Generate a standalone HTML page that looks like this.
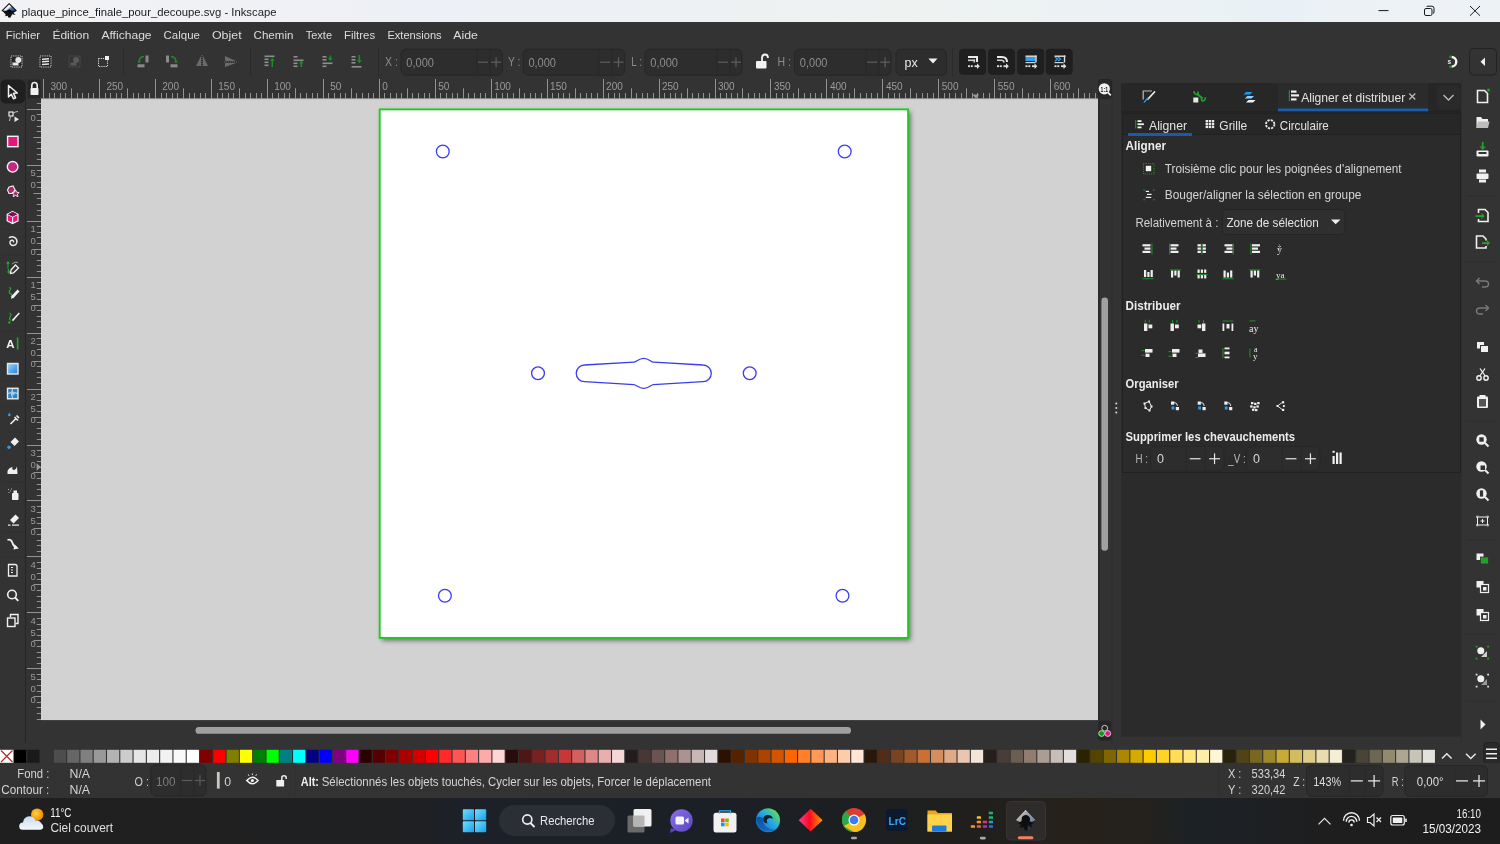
<!DOCTYPE html><html><head><meta charset="utf-8"><title>Inkscape</title><style>html,body{margin:0;padding:0;background:#333;overflow:hidden;width:1500px;height:844px}svg{display:block;font-family:"Liberation Sans",sans-serif;will-change:transform}</style></head><body>
<svg width="1500" height="844" viewBox="0 0 1500 844" font-family="Liberation Sans, sans-serif">
<rect x="0" y="0" width="1500" height="844" fill="#333333" />
<defs><linearGradient id="tg" x1="0" x2="1" y1="0" y2="0"><stop offset="0" stop-color="#f2f2f4"/><stop offset="0.3" stop-color="#edf0f6"/><stop offset="0.6" stop-color="#eef2f1"/><stop offset="0.85" stop-color="#eaf1f6"/><stop offset="1" stop-color="#eef2f5"/></linearGradient></defs>
<rect x="0" y="0" width="1500" height="22" fill="url(#tg)" />
<defs><linearGradient id="lg" x1="0.1" y1="0.2" x2="0.9" y2="0.8"><stop offset="0" stop-color="#ffffff"/><stop offset="0.42" stop-color="#f0f2f5"/><stop offset="0.62" stop-color="#4a78b8"/><stop offset="1" stop-color="#234f90"/></linearGradient></defs>
<path d="M9.2 3.6 L16.2 10.6 L12.8 12.4 L9.3 11.4 L5.6 12.4 L2.2 10.6 Z" fill="url(#lg)" stroke="#101010" stroke-width="1.1" stroke-linejoin="round"/>
<path d="M3.2 10.8 L15 10.8 L13 12.8 L14.8 13.6 L12 14.4 L10.5 17.6 L8.6 17.8 L7.6 15.8 L5.3 16.2 L5.6 14.2 L4.2 13 Z" fill="#111111" />
<path d="M6.5 11 L9.3 9.2 L12 11 L9.3 12.5 Z" fill="#000000" />
<path d="M13 14.2 L15.6 14 L15 14.8 L13.2 15 Z" fill="#333" />
<text x="21.5" y="15.5" font-size="11.3" fill="#1b1b1b" >plaque_pince_finale_pour_decoupe.svg - Inkscape</text>
<line x1="1378.5" y1="10.6" x2="1388.5" y2="10.6" stroke="#1b1b1b" stroke-width="1" />
<rect x="1424.5" y="8.5" width="7.5" height="7" rx="1.5" fill="none" stroke="#1b1b1b" stroke-width="1"/>
<path d="M1426.5 7 Q1426.8 6.2 1428 6.2 L1432 6.2 Q1434 6.2 1434 8.2 L1434 12 Q1434 13.3 1433 13.5" fill="none" stroke="#1b1b1b" stroke-width="1" />
<line x1="1470" y1="6" x2="1480" y2="15.7" stroke="#1b1b1b" stroke-width="1" />
<line x1="1480" y1="6" x2="1470" y2="15.7" stroke="#1b1b1b" stroke-width="1" />
<rect x="0" y="22" width="1500" height="57" fill="#333333" />
<text x="5.7" y="39" font-size="11.8" fill="#dcdcdc" textLength="34.4" lengthAdjust="spacingAndGlyphs" >Fichier</text>
<text x="52.4" y="39" font-size="11.8" fill="#dcdcdc" textLength="36.8" lengthAdjust="spacingAndGlyphs" >Édition</text>
<text x="101.4" y="39" font-size="11.8" fill="#dcdcdc" textLength="50.2" lengthAdjust="spacingAndGlyphs" >Affichage</text>
<text x="163.6" y="39" font-size="11.8" fill="#dcdcdc" textLength="36.3" lengthAdjust="spacingAndGlyphs" >Calque</text>
<text x="211.9" y="39" font-size="11.8" fill="#dcdcdc" textLength="29.7" lengthAdjust="spacingAndGlyphs" >Objet</text>
<text x="253.6" y="39" font-size="11.8" fill="#dcdcdc" textLength="39.8" lengthAdjust="spacingAndGlyphs" >Chemin</text>
<text x="305.7" y="39" font-size="11.8" fill="#dcdcdc" textLength="26.4" lengthAdjust="spacingAndGlyphs" >Texte</text>
<text x="344.09999999999997" y="39" font-size="11.8" fill="#dcdcdc" textLength="31.0" lengthAdjust="spacingAndGlyphs" >Filtres</text>
<text x="387.4" y="39" font-size="11.8" fill="#dcdcdc" textLength="54.2" lengthAdjust="spacingAndGlyphs" >Extensions</text>
<text x="453.2" y="39" font-size="11.8" fill="#dcdcdc" textLength="24.7" lengthAdjust="spacingAndGlyphs" >Aide</text>
<g>
<rect x="11" y="56" width="11" height="11" fill="#262626" stroke="#cfcfcf" stroke-width="1" stroke-dasharray="1.2 1"/>
<circle cx="18.3" cy="60" r="3" fill="#e6e6e6"/>
<rect x="12.5" y="62.5" width="6" height="3" fill="#e6e6e6" />
<rect x="40" y="56" width="11" height="11" fill="#262626" stroke="#cfcfcf" stroke-width="1" stroke-dasharray="1.2 1"/>
<path d="M42 58.5 L49 58.0 L49 59.5 L42 60.0 Z" fill="#e6e6e6" />
<path d="M42 61.1 L49 60.6 L49 62.1 L42 62.6 Z" fill="#e6e6e6" />
<path d="M42 63.7 L49 63.2 L49 64.7 L42 65.2 Z" fill="#e6e6e6" />
<rect x="69" y="56" width="11" height="11" fill="none" stroke="#555" stroke-width="1" stroke-dasharray="1.2 1"/>
<circle cx="76" cy="60" r="3" fill="#5a5a5a"/>
<rect x="70.5" y="62.5" width="6" height="3" fill="#5a5a5a" />
<rect x="98.5" y="58.5" width="9" height="8" fill="none" stroke="#dcdcdc" stroke-width="1" stroke-dasharray="1.2 1"/>
<rect x="105" y="56" width="4" height="4" fill="#f0f0f0" />
</g>
<line x1="123.5" y1="48" x2="123.5" y2="76" stroke="#2b2b2b" stroke-width="1" />
<rect x="137.5" y="64.3" width="7" height="3" fill="#8a8a8a" />
<rect x="145.5" y="55.5" width="3" height="7" fill="#8a8a8a" />
<path d="M139 62 Q139 57 144 56.5" fill="none" stroke="#1f8a24" stroke-width="1.6" />
<path d="M137.5 61 L139 63.5 L141 61 Z" fill="#1f8a24" />
<rect x="166" y="55.5" width="3" height="7" fill="#8a8a8a" />
<rect x="170.5" y="64.3" width="7" height="3" fill="#8a8a8a" />
<path d="M171 56.5 Q176 57 176 62" fill="none" stroke="#1f8a24" stroke-width="1.6" />
<path d="M174 61 L176 63.5 L178 61 Z" fill="#1f8a24" />
<path d="M201 56 L196 66 L201 66 Z" fill="#6a6a6a" />
<path d="M203 56 L208 66 L203 66 Z" fill="#6a6a6a" />
<line x1="202" y1="55" x2="202" y2="67" stroke="#777" stroke-width="0.8" stroke-dasharray="1 1"/>
<path d="M225 56 L236 61 L225 61 Z" fill="#6a6a6a" />
<path d="M225 63 L236 63 L225 67 Z" fill="#6a6a6a" />
<line x1="224" y1="62" x2="237" y2="62" stroke="#777" stroke-width="0.8" stroke-dasharray="1 1"/>
<line x1="250.5" y1="48" x2="250.5" y2="76" stroke="#2b2b2b" stroke-width="1" />
<rect x="264.5" y="55.5" width="10" height="1.6" fill="#8d8d8d" />
<rect x="264.5" y="58.5" width="4" height="1.6" fill="#8d8d8d" />
<rect x="264.5" y="61.5" width="4" height="1.6" fill="#8d8d8d" />
<rect x="264.5" y="64.5" width="4" height="1.6" fill="#8d8d8d" />
<rect x="271.5" y="60" width="1.6" height="7" fill="#1f8a24" />
<path d="M270 61 L272.3 57.5 L274.6 61 Z" fill="#1f8a24" />
<rect x="293.5" y="56" width="4" height="1.6" fill="#8d8d8d" />
<rect x="293.5" y="59.5" width="10" height="1.6" fill="#8d8d8d" />
<rect x="293.5" y="62.5" width="4" height="1.6" fill="#8d8d8d" />
<rect x="293.5" y="65.5" width="4" height="1.6" fill="#8d8d8d" />
<rect x="300.5" y="62.5" width="1.6" height="4.5" fill="#1f8a24" />
<path d="M299 63.5 L301.3 60.5 L303.6 63.5 Z" fill="#1f8a24" />
<rect x="322.5" y="56" width="4" height="1.6" fill="#8d8d8d" />
<rect x="322.5" y="59" width="4" height="1.6" fill="#8d8d8d" />
<rect x="322.5" y="62.5" width="10" height="1.6" fill="#8d8d8d" />
<rect x="322.5" y="65.5" width="4" height="1.6" fill="#8d8d8d" />
<rect x="329.5" y="55.5" width="1.6" height="4.5" fill="#1f8a24" />
<path d="M328 58 L330.3 61 L332.6 58 Z" fill="#1f8a24" />
<rect x="351.5" y="56" width="4" height="1.6" fill="#8d8d8d" />
<rect x="351.5" y="59" width="4" height="1.6" fill="#8d8d8d" />
<rect x="351.5" y="62" width="4" height="1.6" fill="#8d8d8d" />
<rect x="351.5" y="66" width="10" height="1.6" fill="#8d8d8d" />
<rect x="358.5" y="55" width="1.6" height="7" fill="#1f8a24" />
<path d="M357 60 L359.3 63.5 L361.6 60 Z" fill="#1f8a24" />
<line x1="378.5" y1="48" x2="378.5" y2="76" stroke="#2b2b2b" stroke-width="1" />
<text x="385" y="66" font-size="12.5" fill="#8c8c8c" textLength="12.8" lengthAdjust="spacingAndGlyphs" >X :</text>
<rect x="401.0" y="49.2" width="101.2" height="26" rx="5" fill="#2d2d2d" stroke="#262626" stroke-width="1"/>
<line x1="477.0" y1="49.7" x2="477.0" y2="74.7" stroke="#292929" stroke-width="1" />
<line x1="490.0" y1="49.7" x2="490.0" y2="74.7" stroke="#292929" stroke-width="1" />
<line x1="478.0" y1="62.2" x2="488.0" y2="62.2" stroke="#5f5f5f" stroke-width="1.2" />
<line x1="491.1" y1="62.2" x2="501.1" y2="62.2" stroke="#5f5f5f" stroke-width="1.2" />
<line x1="496.1" y1="57.2" x2="496.1" y2="67.2" stroke="#5f5f5f" stroke-width="1.2" />
<text x="406.3" y="66.8" font-size="12.5" fill="#8c8c8c" textLength="27.6" lengthAdjust="spacingAndGlyphs" >0,000</text>
<text x="508" y="66" font-size="12.5" fill="#8c8c8c" textLength="12.5" lengthAdjust="spacingAndGlyphs" >Y :</text>
<rect x="523.1" y="49.2" width="101.8" height="26" rx="5" fill="#2d2d2d" stroke="#262626" stroke-width="1"/>
<line x1="599.1" y1="49.7" x2="599.1" y2="74.7" stroke="#292929" stroke-width="1" />
<line x1="612.1" y1="49.7" x2="612.1" y2="74.7" stroke="#292929" stroke-width="1" />
<line x1="600.1" y1="62.2" x2="610.1" y2="62.2" stroke="#5f5f5f" stroke-width="1.2" />
<line x1="613.5" y1="62.2" x2="623.5" y2="62.2" stroke="#5f5f5f" stroke-width="1.2" />
<line x1="618.5" y1="57.2" x2="618.5" y2="67.2" stroke="#5f5f5f" stroke-width="1.2" />
<text x="528.4" y="66.8" font-size="12.5" fill="#8c8c8c" textLength="27.6" lengthAdjust="spacingAndGlyphs" >0,000</text>
<text x="631.3" y="66" font-size="12.5" fill="#8c8c8c" textLength="10.7" lengthAdjust="spacingAndGlyphs" >L :</text>
<rect x="645.0" y="49.2" width="96.9" height="26" rx="5" fill="#2d2d2d" stroke="#262626" stroke-width="1"/>
<line x1="717.0" y1="49.7" x2="717.0" y2="74.7" stroke="#292929" stroke-width="1" />
<line x1="730.0" y1="49.7" x2="730.0" y2="74.7" stroke="#292929" stroke-width="1" />
<line x1="718.05" y1="62.2" x2="727.95" y2="62.2" stroke="#5f5f5f" stroke-width="1.2" />
<line x1="731.0" y1="62.2" x2="740.9000000000001" y2="62.2" stroke="#5f5f5f" stroke-width="1.2" />
<line x1="735.95" y1="57.250000000000014" x2="735.95" y2="67.14999999999999" stroke="#5f5f5f" stroke-width="1.2" />
<text x="650.3" y="66.8" font-size="12.5" fill="#8c8c8c" textLength="27.6" lengthAdjust="spacingAndGlyphs" >0,000</text>
<rect x="756" y="61" width="10.5" height="7.5" fill="#f2f2f2" rx="1" />
<path d="M762 61 L762 58 Q762 54.5 765 54.5 Q768 54.5 768 58" fill="none" stroke="#f2f2f2" stroke-width="1.8" />
<text x="777.6" y="66" font-size="12.5" fill="#8c8c8c" textLength="13.4" lengthAdjust="spacingAndGlyphs" >H :</text>
<rect x="794.5" y="49.2" width="96.6" height="26" rx="5" fill="#2d2d2d" stroke="#262626" stroke-width="1"/>
<line x1="866.1" y1="49.7" x2="866.1" y2="74.7" stroke="#292929" stroke-width="1" />
<line x1="879.1" y1="49.7" x2="879.1" y2="74.7" stroke="#292929" stroke-width="1" />
<line x1="867.1" y1="62.2" x2="877.1" y2="62.2" stroke="#5f5f5f" stroke-width="1.2" />
<line x1="880.1" y1="62.2" x2="890.1" y2="62.2" stroke="#5f5f5f" stroke-width="1.2" />
<line x1="885.1" y1="57.2" x2="885.1" y2="67.2" stroke="#5f5f5f" stroke-width="1.2" />
<text x="799.8" y="66.8" font-size="12.5" fill="#8c8c8c" textLength="27.6" lengthAdjust="spacingAndGlyphs" >0,000</text>
<rect x="896" y="49.2" width="50.5" height="26" rx="5" fill="#2d2d2d" stroke="#262626" stroke-width="1"/>
<text x="904.6" y="66.5" font-size="12.5" fill="#e8e8e8" >px</text>
<path d="M928.4 58.5 L937.5 58.5 L933 63.5 Z" fill="#f0f0f0" />
<line x1="952.5" y1="48" x2="952.5" y2="76" stroke="#2b2b2b" stroke-width="1" />
<rect x="959.1" y="48.8" width="26.9" height="26" fill="#1f1f1f" rx="4" />
<rect x="988.1" y="48.8" width="26.9" height="26" fill="#1f1f1f" rx="4" />
<rect x="1017.2" y="48.8" width="26.9" height="26" fill="#1f1f1f" rx="4" />
<rect x="1045.8" y="48.8" width="26.9" height="26" fill="#1f1f1f" rx="4" />
<rect x="968" y="56" width="10" height="2" fill="#eaeaea" />
<rect x="976" y="56" width="2" height="6" fill="#eaeaea" />
<rect x="968" y="59.5" width="7" height="1.6" fill="#cfcfcf" />
<rect x="973.5" y="59.5" width="1.6" height="3" fill="#cfcfcf" />
<rect x="968.0" y="65.3" width="2" height="1.8" fill="#e0e0e0" />
<rect x="970.8" y="65.3" width="2" height="1.8" fill="#e0e0e0" />
<rect x="974.5" y="65.3" width="3.5" height="1.8" fill="#e0e0e0" />
<path d="M977 63.3 L979.8 66.2 L977 69.1 Z" fill="#e0e0e0" />
<path d="M997 57 L1002 57 Q1007 57 1007 62" fill="none" stroke="#eaeaea" stroke-width="2" />
<path d="M997 60.3 L1001 60.3 Q1004 60.3 1004 62.5" fill="none" stroke="#cfcfcf" stroke-width="1.6" />
<rect x="997.0" y="65.3" width="2" height="1.8" fill="#e0e0e0" />
<rect x="999.8" y="65.3" width="2" height="1.8" fill="#e0e0e0" />
<rect x="1003.5" y="65.3" width="3.5" height="1.8" fill="#e0e0e0" />
<path d="M1006 63.3 L1008.8 66.2 L1006 69.1 Z" fill="#e0e0e0" />
<rect x="1025.5" y="56.5" width="10" height="4.5" fill="#2ea0ee" />
<rect x="1025.5" y="55.5" width="11" height="1.4" fill="#e0e0e0" />
<rect x="1035.3" y="55.5" width="1.4" height="7" fill="#e0e0e0" />
<rect x="1025.5" y="62" width="10" height="1.2" fill="#cfcfcf" />
<rect x="1025.5" y="65.3" width="2" height="1.8" fill="#e0e0e0" />
<rect x="1028.3" y="65.3" width="2" height="1.8" fill="#e0e0e0" />
<rect x="1032.0" y="65.3" width="3.5" height="1.8" fill="#e0e0e0" />
<path d="M1034.5 63.3 L1037.3 66.2 L1034.5 69.1 Z" fill="#e0e0e0" />
<path d="M1055 57 L1057.5 59 L1055 61 M1058 57 L1060.5 59 L1058 61" fill="none" stroke="#2ea0ee" stroke-width="1.4" />
<rect x="1054.5" y="55.5" width="11" height="1.4" fill="#e0e0e0" />
<rect x="1063.8" y="55.5" width="1.4" height="7" fill="#e0e0e0" />
<rect x="1054.5" y="62" width="9" height="1.2" fill="#cfcfcf" />
<rect x="1054.5" y="65.3" width="2" height="1.8" fill="#e0e0e0" />
<rect x="1057.3" y="65.3" width="2" height="1.8" fill="#e0e0e0" />
<rect x="1061.0" y="65.3" width="3.5" height="1.8" fill="#e0e0e0" />
<path d="M1063.5 63.3 L1066.3 66.2 L1063.5 69.1 Z" fill="#e0e0e0" />
<path d="M1451.5 57 A4.8 4.8 0 0 1 1451.5 66.6" fill="none" stroke="#f4f4f4" stroke-width="2.4" />
<circle cx="1450.4" cy="56.8" r="1.4" fill="#0a9a14"/><circle cx="1450.4" cy="66.8" r="1.4" fill="#0a9a14"/>
<text x="1447.6" y="64.2" font-size="6.5" fill="#e8e8e8" font-weight="bold" >s</text>
<rect x="1469.5" y="48.5" width="27" height="26.5" rx="4" fill="#333333" stroke="#222222" stroke-width="1"/>
<path d="M1485 57.5 L1485 66 L1480.5 61.7 Z" fill="#f0f0f0" />
<rect x="41" y="98.8" width="1057" height="621.5" fill="#d2d2d2" />
<defs><filter id="sh" x="-10%" y="-10%" width="120%" height="120%"><feGaussianBlur stdDeviation="2.8"/></filter></defs>
<rect x="381.8" y="111.8" width="528.6" height="528.6" fill="#585858" filter="url(#sh)" opacity="0.9"/>
<rect x="379.7" y="109.4" width="528.4" height="528.5" fill="#ffffff" />
<rect x="379.7" y="109.4" width="528.4" height="528.5" fill="none" stroke="#1fcb1f" stroke-width="1.9"/>
<circle cx="442.8" cy="151.5" r="6.4" fill="none" stroke="#3a3cf0" stroke-width="1.3"/>
<circle cx="844.7" cy="151.5" r="6.4" fill="none" stroke="#3a3cf0" stroke-width="1.3"/>
<circle cx="538" cy="373.3" r="6.4" fill="none" stroke="#3a3cf0" stroke-width="1.3"/>
<circle cx="749.7" cy="373.3" r="6.4" fill="none" stroke="#3a3cf0" stroke-width="1.3"/>
<circle cx="444.9" cy="595.8" r="6.4" fill="none" stroke="#3a3cf0" stroke-width="1.3"/>
<circle cx="842.5" cy="595.8" r="6.4" fill="none" stroke="#3a3cf0" stroke-width="1.3"/>
<path d="M584.5 365 L633.8 362.2 C636.5 362 638.5 358.3 643.7 358.3 C648.9 358.3 650.8 362 653.5 362.2 L703 365 A8.3 8.3 0 0 1 703 381.6 L653.5 384.6 C650.8 384.8 648.9 388.3 643.7 388.3 C638.5 388.3 636.5 384.8 633.8 384.6 L584.5 381.6 A8.3 8.3 0 0 1 584.5 365 Z" fill="none" stroke="#3a3cf0" stroke-width="1.3" />
<rect x="41" y="720.3" width="1057" height="21" fill="#333333" />
<rect x="195.5" y="727" width="655.5" height="6.8" fill="#a0a0a0" rx="3.4" />
<rect x="1098" y="79" width="23" height="664" fill="#333333" />
<line x1="1098.8" y1="98.8" x2="1098.8" y2="720.3" stroke="#2a2a2a" stroke-width="1.5" />
<rect x="1101.4" y="297.4" width="6.6" height="253.4" fill="#a0a0a0" rx="3.3" />
<line x1="1112" y1="79" x2="1112" y2="743" stroke="#2c2c2c" stroke-width="1" />
<circle cx="1116.3" cy="403.5" r="1" fill="#dcdcdc"/>
<circle cx="1116.3" cy="408" r="1" fill="#dcdcdc"/>
<circle cx="1116.3" cy="412.5" r="1" fill="#dcdcdc"/>
<rect x="1098.3" y="720.5" width="13" height="20.2" fill="#262626" rx="3" />
<circle cx="1104.7" cy="728.2" r="2.9" fill="#262626" stroke="#d8d8d8" stroke-width="0.9"/>
<circle cx="1101.6" cy="733.5" r="2.9" fill="#0a9a14" stroke="#d8d8d8" stroke-width="0.9"/>
<circle cx="1107.8" cy="733.5" r="2.9" fill="#e8148c" stroke="#d8d8d8" stroke-width="0.9"/>
<rect x="41" y="79" width="1057" height="19.5" fill="#333333" />
<path d="M43.5 79V98.5 M49.5 93V98.5 M54.5 93V98.5 M60.5 93V98.5 M65.5 93V98.5 M71.5 88.3V98.5 M77.5 93V98.5 M82.5 93V98.5 M88.5 93V98.5 M93.5 93V98.5 M99.5 79V98.5 M105.5 93V98.5 M110.5 93V98.5 M116.5 93V98.5 M121.5 93V98.5 M127.5 88.3V98.5 M133.5 93V98.5 M138.5 93V98.5 M144.5 93V98.5 M149.5 93V98.5 M155.5 79V98.5 M161.5 93V98.5 M166.5 93V98.5 M172.5 93V98.5 M177.5 93V98.5 M183.5 88.3V98.5 M189.5 93V98.5 M194.5 93V98.5 M200.5 93V98.5 M205.5 93V98.5 M211.5 79V98.5 M217.5 93V98.5 M222.5 93V98.5 M228.5 93V98.5 M233.5 93V98.5 M239.5 88.3V98.5 M245.5 93V98.5 M250.5 93V98.5 M256.5 93V98.5 M261.5 93V98.5 M267.5 79V98.5 M272.5 93V98.5 M278.5 93V98.5 M284.5 93V98.5 M289.5 93V98.5 M295.5 88.3V98.5 M300.5 93V98.5 M306.5 93V98.5 M312.5 93V98.5 M317.5 93V98.5 M323.5 79V98.5 M328.5 93V98.5 M334.5 93V98.5 M340.5 93V98.5 M345.5 93V98.5 M351.5 88.3V98.5 M356.5 93V98.5 M362.5 93V98.5 M368.5 93V98.5 M373.5 93V98.5 M379.5 79V98.5 M384.5 93V98.5 M390.5 93V98.5 M396.5 93V98.5 M401.5 93V98.5 M407.5 88.3V98.5 M412.5 93V98.5 M418.5 93V98.5 M424.5 93V98.5 M429.5 93V98.5 M435.5 79V98.5 M440.5 93V98.5 M446.5 93V98.5 M452.5 93V98.5 M457.5 93V98.5 M463.5 88.3V98.5 M468.5 93V98.5 M474.5 93V98.5 M480.5 93V98.5 M485.5 93V98.5 M491.5 79V98.5 M496.5 93V98.5 M502.5 93V98.5 M507.5 93V98.5 M513.5 93V98.5 M519.5 88.3V98.5 M524.5 93V98.5 M530.5 93V98.5 M535.5 93V98.5 M541.5 93V98.5 M547.5 79V98.5 M552.5 93V98.5 M558.5 93V98.5 M563.5 93V98.5 M569.5 93V98.5 M575.5 88.3V98.5 M580.5 93V98.5 M586.5 93V98.5 M591.5 93V98.5 M597.5 93V98.5 M603.5 79V98.5 M608.5 93V98.5 M614.5 93V98.5 M619.5 93V98.5 M625.5 93V98.5 M631.5 88.3V98.5 M636.5 93V98.5 M642.5 93V98.5 M647.5 93V98.5 M653.5 93V98.5 M659.5 79V98.5 M664.5 93V98.5 M670.5 93V98.5 M675.5 93V98.5 M681.5 93V98.5 M687.5 88.3V98.5 M692.5 93V98.5 M698.5 93V98.5 M703.5 93V98.5 M709.5 93V98.5 M715.5 79V98.5 M720.5 93V98.5 M726.5 93V98.5 M731.5 93V98.5 M737.5 93V98.5 M742.5 88.3V98.5 M748.5 93V98.5 M754.5 93V98.5 M759.5 93V98.5 M765.5 93V98.5 M770.5 79V98.5 M776.5 93V98.5 M782.5 93V98.5 M787.5 93V98.5 M793.5 93V98.5 M798.5 88.3V98.5 M804.5 93V98.5 M810.5 93V98.5 M815.5 93V98.5 M821.5 93V98.5 M826.5 79V98.5 M832.5 93V98.5 M838.5 93V98.5 M843.5 93V98.5 M849.5 93V98.5 M854.5 88.3V98.5 M860.5 93V98.5 M866.5 93V98.5 M871.5 93V98.5 M877.5 93V98.5 M882.5 79V98.5 M888.5 93V98.5 M894.5 93V98.5 M899.5 93V98.5 M905.5 93V98.5 M910.5 88.3V98.5 M916.5 93V98.5 M922.5 93V98.5 M927.5 93V98.5 M933.5 93V98.5 M938.5 79V98.5 M944.5 93V98.5 M949.5 93V98.5 M955.5 93V98.5 M961.5 93V98.5 M966.5 88.3V98.5 M972.5 93V98.5 M977.5 93V98.5 M983.5 93V98.5 M989.5 93V98.5 M994.5 79V98.5 M1000.5 93V98.5 M1005.5 93V98.5 M1011.5 93V98.5 M1017.5 93V98.5 M1022.5 88.3V98.5 M1028.5 93V98.5 M1033.5 93V98.5 M1039.5 93V98.5 M1045.5 93V98.5 M1050.5 79V98.5 M1056.5 93V98.5 M1061.5 93V98.5 M1067.5 93V98.5 M1073.5 93V98.5 M1078.5 88.3V98.5 M1084.5 93V98.5 M1089.5 93V98.5 M1095.5 93V98.5" stroke="#939393" stroke-width="1" fill="none"/>
<text x="50.4" y="90" font-size="10" fill="#9a9a9a" >300</text>
<text x="106.4" y="90" font-size="10" fill="#9a9a9a" >250</text>
<text x="162.3" y="90" font-size="10" fill="#9a9a9a" >200</text>
<text x="218.3" y="90" font-size="10" fill="#9a9a9a" >150</text>
<text x="274.2" y="90" font-size="10" fill="#9a9a9a" >100</text>
<text x="330.2" y="90" font-size="10" fill="#9a9a9a" >50</text>
<text x="382.3" y="90" font-size="10" fill="#9a9a9a" >0</text>
<text x="438.2" y="90" font-size="10" fill="#9a9a9a" >50</text>
<text x="494.2" y="90" font-size="10" fill="#9a9a9a" >100</text>
<text x="550.1" y="90" font-size="10" fill="#9a9a9a" >150</text>
<text x="606.1" y="90" font-size="10" fill="#9a9a9a" >200</text>
<text x="662.0" y="90" font-size="10" fill="#9a9a9a" >250</text>
<text x="718.0" y="90" font-size="10" fill="#9a9a9a" >300</text>
<text x="774.0" y="90" font-size="10" fill="#9a9a9a" >350</text>
<text x="829.9" y="90" font-size="10" fill="#9a9a9a" >400</text>
<text x="885.9" y="90" font-size="10" fill="#9a9a9a" >450</text>
<text x="941.8" y="90" font-size="10" fill="#9a9a9a" >500</text>
<text x="997.8" y="90" font-size="10" fill="#9a9a9a" >550</text>
<text x="1053.7" y="90" font-size="10" fill="#9a9a9a" >600</text>
<line x1="41" y1="98.8" x2="1097.6" y2="98.8" stroke="#bdbdbd" stroke-width="0.8" />
<path d="M972.4 94.6 L979.2 94.6 L975.8 98.5 Z" fill="#9a9a9a" />
<rect x="27.5" y="79.5" width="13" height="19" fill="#262626" rx="2.5" />
<rect x="30.5" y="88" width="8" height="7" fill="#f0f0f0" rx="0.8" />
<path d="M31.8 88 L31.8 85.6 Q31.8 82.5 34.5 82.5 Q37.2 82.5 37.2 85.6 L37.2 88" fill="none" stroke="#f0f0f0" stroke-width="1.6" />
<rect x="1098.5" y="79.5" width="13" height="19" rx="3" fill="#282828" stroke="#232323" stroke-width="1"/>
<circle cx="1104.3" cy="88.8" r="5.6" fill="#f0f0f0"/>
<line x1="1107.8" y1="92.3" x2="1110.8" y2="95.3" stroke="#f0f0f0" stroke-width="1.8" />
<text x="1100.6" y="91.6" font-size="6.5" fill="#1a1a1a" font-weight="bold" textLength="7.4" lengthAdjust="spacingAndGlyphs" >1:1</text>
<rect x="26" y="98.8" width="15" height="621.5" fill="#333333" />
<line x1="25.5" y1="79" x2="25.5" y2="743" stroke="#262626" stroke-width="1" />
<path d="M36.8 103.5H41 M27 109.5H41 M36.8 114.5H41 M36.8 120.5H41 M36.8 126.5H41 M36.8 131.5H41 M33.5 137.5H41 M36.8 142.5H41 M36.8 148.5H41 M36.8 154.5H41 M36.8 159.5H41 M27 165.5H41 M36.8 170.5H41 M36.8 176.5H41 M36.8 182.5H41 M36.8 187.5H41 M33.5 193.5H41 M36.8 198.5H41 M36.8 204.5H41 M36.8 210.5H41 M36.8 215.5H41 M27 221.5H41 M36.8 226.5H41 M36.8 232.5H41 M36.8 237.5H41 M36.8 243.5H41 M33.5 249.5H41 M36.8 254.5H41 M36.8 260.5H41 M36.8 265.5H41 M36.8 271.5H41 M27 277.5H41 M36.8 282.5H41 M36.8 288.5H41 M36.8 293.5H41 M36.8 299.5H41 M33.5 305.5H41 M36.8 310.5H41 M36.8 316.5H41 M36.8 321.5H41 M36.8 327.5H41 M27 333.5H41 M36.8 338.5H41 M36.8 344.5H41 M36.8 349.5H41 M36.8 355.5H41 M33.5 361.5H41 M36.8 366.5H41 M36.8 372.5H41 M36.8 377.5H41 M36.8 383.5H41 M27 389.5H41 M36.8 394.5H41 M36.8 400.5H41 M36.8 405.5H41 M36.8 411.5H41 M33.5 417.5H41 M36.8 422.5H41 M36.8 428.5H41 M36.8 433.5H41 M36.8 439.5H41 M27 445.5H41 M36.8 450.5H41 M36.8 456.5H41 M36.8 461.5H41 M36.8 467.5H41 M33.5 472.5H41 M36.8 478.5H41 M36.8 484.5H41 M36.8 489.5H41 M36.8 495.5H41 M27 500.5H41 M36.8 506.5H41 M36.8 512.5H41 M36.8 517.5H41 M36.8 523.5H41 M33.5 528.5H41 M36.8 534.5H41 M36.8 540.5H41 M36.8 545.5H41 M36.8 551.5H41 M27 556.5H41 M36.8 562.5H41 M36.8 568.5H41 M36.8 573.5H41 M36.8 579.5H41 M33.5 584.5H41 M36.8 590.5H41 M36.8 596.5H41 M36.8 601.5H41 M36.8 607.5H41 M27 612.5H41 M36.8 618.5H41 M36.8 624.5H41 M36.8 629.5H41 M36.8 635.5H41 M33.5 640.5H41 M36.8 646.5H41 M36.8 652.5H41 M36.8 657.5H41 M36.8 663.5H41 M27 668.5H41 M36.8 674.5H41 M36.8 679.5H41 M36.8 685.5H41 M36.8 691.5H41 M33.5 696.5H41 M36.8 702.5H41 M36.8 707.5H41 M36.8 713.5H41 M36.8 719.5H41" stroke="#939393" stroke-width="1" fill="none"/>
<text x="33.2" y="120.5" font-size="9.5" fill="#9a9a9a" text-anchor="middle" >0</text>
<text x="33.2" y="176.4" font-size="9.5" fill="#9a9a9a" text-anchor="middle" >5</text>
<text x="33.2" y="187.9" font-size="9.5" fill="#9a9a9a" text-anchor="middle" >0</text>
<text x="33.2" y="232.4" font-size="9.5" fill="#9a9a9a" text-anchor="middle" >1</text>
<text x="33.2" y="243.9" font-size="9.5" fill="#9a9a9a" text-anchor="middle" >0</text>
<text x="33.2" y="255.4" font-size="9.5" fill="#9a9a9a" text-anchor="middle" >0</text>
<text x="33.2" y="288.3" font-size="9.5" fill="#9a9a9a" text-anchor="middle" >1</text>
<text x="33.2" y="299.8" font-size="9.5" fill="#9a9a9a" text-anchor="middle" >5</text>
<text x="33.2" y="311.3" font-size="9.5" fill="#9a9a9a" text-anchor="middle" >0</text>
<text x="33.2" y="344.3" font-size="9.5" fill="#9a9a9a" text-anchor="middle" >2</text>
<text x="33.2" y="355.8" font-size="9.5" fill="#9a9a9a" text-anchor="middle" >0</text>
<text x="33.2" y="367.3" font-size="9.5" fill="#9a9a9a" text-anchor="middle" >0</text>
<text x="33.2" y="400.2" font-size="9.5" fill="#9a9a9a" text-anchor="middle" >2</text>
<text x="33.2" y="411.8" font-size="9.5" fill="#9a9a9a" text-anchor="middle" >5</text>
<text x="33.2" y="423.2" font-size="9.5" fill="#9a9a9a" text-anchor="middle" >0</text>
<text x="33.2" y="456.2" font-size="9.5" fill="#9a9a9a" text-anchor="middle" >3</text>
<text x="33.2" y="467.7" font-size="9.5" fill="#9a9a9a" text-anchor="middle" >0</text>
<text x="33.2" y="479.2" font-size="9.5" fill="#9a9a9a" text-anchor="middle" >0</text>
<text x="33.2" y="512.1" font-size="9.5" fill="#9a9a9a" text-anchor="middle" >3</text>
<text x="33.2" y="523.6" font-size="9.5" fill="#9a9a9a" text-anchor="middle" >5</text>
<text x="33.2" y="535.1" font-size="9.5" fill="#9a9a9a" text-anchor="middle" >0</text>
<text x="33.2" y="568.1" font-size="9.5" fill="#9a9a9a" text-anchor="middle" >4</text>
<text x="33.2" y="579.6" font-size="9.5" fill="#9a9a9a" text-anchor="middle" >0</text>
<text x="33.2" y="591.1" font-size="9.5" fill="#9a9a9a" text-anchor="middle" >0</text>
<text x="33.2" y="624.1" font-size="9.5" fill="#9a9a9a" text-anchor="middle" >4</text>
<text x="33.2" y="635.6" font-size="9.5" fill="#9a9a9a" text-anchor="middle" >5</text>
<text x="33.2" y="647.1" font-size="9.5" fill="#9a9a9a" text-anchor="middle" >0</text>
<text x="33.2" y="680.0" font-size="9.5" fill="#9a9a9a" text-anchor="middle" >5</text>
<text x="33.2" y="691.5" font-size="9.5" fill="#9a9a9a" text-anchor="middle" >0</text>
<text x="33.2" y="703.0" font-size="9.5" fill="#9a9a9a" text-anchor="middle" >0</text>
<path d="M36.6 463.2 L36.6 470.8 L41 467 Z" fill="#9a9a9a" />
<rect x="0" y="79" width="25" height="664" fill="#333333" />
<rect x="0.5" y="79.5" width="24.5" height="24" fill="#1f1f1f" rx="5" />
<line x1="1" y1="229.5" x2="25" y2="229.5" stroke="#303030" stroke-width="1" />
<line x1="1" y1="255" x2="25" y2="255" stroke="#303030" stroke-width="1" />
<line x1="1" y1="331" x2="25" y2="331" stroke="#303030" stroke-width="1" />
<line x1="1" y1="381.5" x2="25" y2="381.5" stroke="#303030" stroke-width="1" />
<line x1="1" y1="406.5" x2="25" y2="406.5" stroke="#303030" stroke-width="1" />
<line x1="1" y1="432" x2="25" y2="432" stroke="#303030" stroke-width="1" />
<line x1="1" y1="482" x2="25" y2="482" stroke="#303030" stroke-width="1" />
<line x1="1" y1="532" x2="25" y2="532" stroke="#303030" stroke-width="1" />
<line x1="1" y1="557.5" x2="25" y2="557.5" stroke="#303030" stroke-width="1" />
<path d="M8.5 85.5 L8.5 97 L11.3 94.3 L13.5 98.7 L15.6 97.7 L13.4 93.3 L17.3 93 Z" fill="none" stroke="#f0f0f0" stroke-width="1.5" stroke-linejoin="round"/>
<rect x="9" y="112" width="4" height="4" fill="none" stroke="#e8e8e8" stroke-width="1.2"/>
<path d="M9.5 121 L10.5 116.5 M13 113.5 Q15 111.5 18 111.5" fill="none" stroke="#cfcfcf" stroke-width="0.9" />
<path d="M14.5 116.5 L14.5 122 L19 119.3 Z" fill="#e8e8e8" />
<rect x="7.6" y="136.3" width="10.4" height="10.4" fill="#e5177e" stroke="#f4f4f4" stroke-width="1.4"/>
<circle cx="12.6" cy="166.8" r="5.3" fill="#c62880" stroke="#f4f4f4" stroke-width="1.4"/>
<path d="M9 187 L13 186 L15 189.5 L13 193.5 L9 193.5 L7.5 190 Z" fill="#b02670" stroke="#f0f0f0" stroke-width="1.1" />
<path d="M15.5 190 L16.8 192.3 L19.2 192.5 L17.4 194.2 L18 196.7 L15.5 195.4 L13.2 196.7 L13.7 194.2 L12 192.5 L14.4 192.3 Z" fill="#b02670" stroke="#f0f0f0" stroke-width="0.9" />
<path d="M12.6 211.5 L18 214.3 L18 220.8 L12.6 223.6 L7.2 220.8 L7.2 214.3 Z" fill="#e5177e" stroke="#f4f4f4" stroke-width="1.2" />
<path d="M7.2 214.3 L12.6 217 L18 214.3 M12.6 217 L12.6 223.6" fill="none" stroke="#f4f4f4" stroke-width="1.1" />
<path d="M12.6 211.8 L17.4 214.3 L12.6 216.7 L7.8 214.3 Z" fill="#7a1450" />
<path d="M13.46 241.73 L13.48 241.66 L13.49 241.59 L13.49 241.51 L13.49 241.43 L13.48 241.35 L13.46 241.26 L13.43 241.18 L13.40 241.10 L13.36 241.02 L13.31 240.93 L13.26 240.85 L13.20 240.78 L13.13 240.70 L13.05 240.64 L12.96 240.57 L12.87 240.51 L12.78 240.46 L12.67 240.41 L12.56 240.37 L12.45 240.34 L12.33 240.32 L12.21 240.30 L12.08 240.30 L11.95 240.30 L11.82 240.31 L11.69 240.33 L11.56 240.37 L11.43 240.41 L11.30 240.47 L11.17 240.53 L11.05 240.61 L10.92 240.69 L10.81 240.79 L10.70 240.89 L10.59 241.01 L10.49 241.13 L10.40 241.26 L10.32 241.41 L10.25 241.55 L10.18 241.71 L10.13 241.87 L10.09 242.04 L10.06 242.22 L10.04 242.40 L10.04 242.58 L10.05 242.76 L10.07 242.95 L10.10 243.13 L10.15 243.32 L10.22 243.50 L10.29 243.68 L10.38 243.86 L10.49 244.03 L10.60 244.20 L10.74 244.36 L10.88 244.51 L11.03 244.66 L11.20 244.79 L11.38 244.92 L11.57 245.03 L11.77 245.13 L11.97 245.22 L12.19 245.29 L12.41 245.35 L12.64 245.39 L12.87 245.42 L13.11 245.43 L13.35 245.43 L13.59 245.40 L13.84 245.36 L14.08 245.31 L14.32 245.23 L14.55 245.14 L14.79 245.03 L15.01 244.90 L15.23 244.76 L15.44 244.60 L15.64 244.43 L15.83 244.24 L16.01 244.03 L16.17 243.81 L16.32 243.58 L16.46 243.34 L16.58 243.08 L16.68 242.82 L16.76 242.54 L16.83 242.26 L16.87 241.97 L16.90 241.68 L16.91 241.38 L16.89 241.08 L16.86 240.78 L16.80 240.48 L16.72 240.18 L16.62 239.89 L16.50 239.60 L16.36 239.32 L16.20 239.04 L16.02 238.78 L15.82 238.53 L15.60 238.29 L15.36 238.06 L15.11 237.85 L14.83 237.65 L14.55 237.48 L14.25 237.32 L13.94 237.18 L13.61 237.06 L13.28 236.97 L12.94 236.89 L12.59 236.85 L12.24 236.82 L11.88 236.82 L11.52 236.84 L11.16 236.89 L10.81 236.96 L10.45 237.06 L10.11 237.18 L9.76 237.33 L9.43 237.51" fill="none" stroke="#eaeaea" stroke-width="1.5" stroke-linecap="round"/>
<circle cx="8" cy="263" r="1.4" fill="#27a52c"/><circle cx="8.8" cy="272" r="1.4" fill="#27a52c"/>
<path d="M8 263 Q7.5 268 8.8 272" fill="none" stroke="#27a52c" stroke-width="0.9" />
<path d="M11 270 L15.5 265 L18.5 268 L13.5 272.8 L10.5 273.5 Z" fill="none" stroke="#f0f0f0" stroke-width="1.3" />
<path d="M12 264 Q15 261 18 262.5" fill="none" stroke="#bbb" stroke-width="0.8" />
<path d="M9 288 Q12 287 10 290 Q8 293 11 294 Q12.5 294.5 11 297" fill="none" stroke="#27a52c" stroke-width="1.2" />
<path d="M11.5 296 L17.5 289.5 L19.5 291.5 L13.5 298 L11 298.7 Z" fill="#f0f0f0" />
<path d="M9.5 313 Q12 314 10 317 Q8.5 319.5 11 320.5" fill="none" stroke="#27a52c" stroke-width="1.2" />
<path d="M11.8 320 L18.8 312.5 L19.8 313.4 L13 321.3 Z" fill="#f0f0f0" />
<circle cx="9.4" cy="322.5" r="1.2" fill="#27a52c"/>
<text x="6.3" y="348.3" font-size="11.5" fill="#f4f4f4" font-weight="bold" >A</text>
<rect x="16.8" y="337.5" width="1.6" height="12" fill="#27a52c" />
<defs><linearGradient id="gr1" x1="0" y1="0" x2="1" y2="1"><stop offset="0" stop-color="#9fd4ff"/><stop offset="1" stop-color="#1f7fd8"/></linearGradient></defs>
<rect x="7.5" y="363.5" width="10.5" height="10.5" fill="url(#gr1)" stroke="#e8e8e8" stroke-width="1.4"/>
<rect x="7.5" y="388.3" width="10.5" height="10.5" fill="#2a84c8" stroke="#e8e8e8" stroke-width="1.4"/>
<path d="M7.5 393.5 Q12.7 391 18 393.5 M12.7 388.3 Q10 393.5 12.7 398.8" fill="none" stroke="#e8e8e8" stroke-width="0.9" />
<circle cx="12.7" cy="393.5" r="2" fill="#8fd0ff"/>
<path d="M9.3 412.5 Q8 414.5 8 415.3 A1.4 1.4 0 0 0 10.7 415.3 Q10.7 414.5 9.3 412.5 Z" fill="#2a9df4" />
<path d="M10.5 424 L16 418.5 M14.5 417 L18 420.5 M16.5 415.5 L19 418" fill="none" stroke="#f0f0f0" stroke-width="1.6" />
<path d="M10.5 442 L15 437.5 L19 441.5 L14.5 446 Z" fill="#f0f0f0" />
<circle cx="9" cy="447.2" r="1.7" fill="#2a9df4"/>
<path d="M7.5 474 L7.5 471 Q9 467.5 12.5 467 Q11.5 469.5 14 470 Q16.5 469 17 466.5 L17.5 474 Z" fill="#f0f0f0" />
<rect x="12" y="493" width="6.5" height="7" fill="#f0f0f0" rx="0.8" />
<rect x="13.5" y="490.5" width="3.5" height="2.5" fill="#f0f0f0" />
<rect x="8" y="489" width="0.9" height="0.9" fill="#cfcfcf" />
<rect x="10" y="490.5" width="0.9" height="0.9" fill="#cfcfcf" />
<rect x="8.5" y="492" width="0.9" height="0.9" fill="#cfcfcf" />
<rect x="11" y="488.5" width="0.9" height="0.9" fill="#cfcfcf" />
<path d="M10 520 L15.5 514.5 L19 518 L13.5 523.5 Z" fill="#f0f0f0" />
<rect x="8" y="524.5" width="2.5" height="1.2" fill="#f0f0f0" />
<rect x="12" y="524.5" width="7" height="1.2" fill="#f0f0f0" />
<path d="M7.5 540 Q11 538.5 12.5 543 Q13.5 546.5 16.5 547.5" fill="none" stroke="#f0f0f0" stroke-width="1.8" />
<path d="M14.5 544.3 L18.8 548.6 L13.5 549.5 Z" fill="#f0f0f0" />
<path d="M8.5 564.5 L15 564.5 Q17 564.5 17 566.5 L17 576 L8.5 576 Z" fill="none" stroke="#f0f0f0" stroke-width="1.3" />
<path d="M11 567.5 L13 567.5 M11 570 L13 570 M11 572.5 L13 572.5" fill="none" stroke="#f0f0f0" stroke-width="1" />
<circle cx="12" cy="594.5" r="4.3" fill="none" stroke="#f0f0f0" stroke-width="1.6"/>
<line x1="15" y1="597.5" x2="18.3" y2="600.8" stroke="#f0f0f0" stroke-width="1.8" />
<rect x="7.5" y="618" width="7.5" height="8.5" fill="none" stroke="#f0f0f0" stroke-width="1.4"/>
<path d="M10.5 617 L10.5 614.5 L18 614.5 L18 623.5 L15.5 623.5" fill="none" stroke="#f0f0f0" stroke-width="1.4" />
<rect x="1121" y="79" width="341" height="4" fill="#333333" />
<rect x="1121" y="83" width="340.5" height="653.5" fill="#2b2b2b" />
<rect x="1121" y="83" width="340.5" height="28.5" fill="#272727" />
<rect x="1278" y="83" width="150.3" height="28.5" fill="#2b2b2b" />
<rect x="1428.3" y="83" width="33.2" height="28.5" fill="#262626" />
<rect x="1437" y="85" width="23.5" height="24.5" fill="#2a2a2a" rx="5" />
<path d="M1443.5 95 L1448.5 100 L1453.5 95" fill="none" stroke="#bdbdbd" stroke-width="1.3" />
<rect x="1278" y="108.5" width="150.3" height="3.2" fill="#1c5cae" />
<line x1="1121" y1="112" x2="1461.5" y2="112" stroke="#1f1f1f" stroke-width="1" />
<path d="M1143.2 99.5 L1143.2 91 L1152 91" fill="none" stroke="#bdbdbd" stroke-width="1.2" />
<path d="M1154.5 92 L1148 99" fill="none" stroke="#e8e8e8" stroke-width="1.8" stroke-linecap="round"/>
<path d="M1148.3 98 Q1146.5 99.5 1145.5 101.5 Q1144.2 102.6 1143.8 102.3 Q1145.5 100.5 1147 98.2 Z" fill="#2aa0f0" stroke="#2aa0f0" stroke-width="0.8" />
<rect x="1193.3" y="97.5" width="5" height="5" fill="#e8e8e8" />
<path d="M1196.5 93.5 L1202.8 98.5" fill="none" stroke="#1fa526" stroke-width="2" />
<path d="M1194 91 Q1194.2 94.8 1197.5 94.6 Q1198.8 93.6 1197.8 91.5" fill="none" stroke="#1fa526" stroke-width="1.6" />
<path d="M1205.5 97.2 Q1205.3 101.2 1201.8 100.8 Q1200.8 99.5 1201.8 97.6" fill="none" stroke="#1fa526" stroke-width="1.6" />
<path d="M1243.5 94.5 L1246 92 L1252.5 92 L1250 94.5 Z" fill="#1a9af0" />
<path d="M1244.8 98.5 L1247.3 96 L1254 96 L1251.5 98.5 Z" fill="#8ccfff" />
<path d="M1246 102.5 L1248.5 100 L1255.5 100 L1253 102.5 Z" fill="#f0f0f0" />
<rect x="1288.8" y="90.2" width="1" height="11" fill="#22a02a" />
<rect x="1291" y="90.5" width="5.5" height="2.2" fill="#f0f0f0" />
<rect x="1291" y="94.3" width="8" height="2.2" fill="#f0f0f0" />
<rect x="1291" y="98.3" width="5.5" height="2.2" fill="#f0f0f0" />
<text x="1301.2" y="102" font-size="12.4" fill="#e2e2e2" textLength="104" lengthAdjust="spacingAndGlyphs" >Aligner et distribuer</text>
<path d="M1409.3 93.5 L1415.3 99.5 M1415.3 93.5 L1409.3 99.5" fill="none" stroke="#bdbdbd" stroke-width="1.2" />
<rect x="1122.5" y="113.5" width="338" height="359" fill="#2b2b2b" stroke="#212121" stroke-width="1"/>
<rect x="1123" y="114" width="337" height="20.3" fill="#272727" />
<line x1="1123" y1="134.5" x2="1460" y2="134.5" stroke="#212121" stroke-width="1" />
<rect x="1128" y="133" width="64.1" height="3" fill="#1a5aa8" />
<rect x="1135.3" y="120" width="0.9" height="8.5" fill="#22a02a" />
<rect x="1137.5" y="120.2" width="4" height="1.8" fill="#f0f0f0" />
<rect x="1137.5" y="123.3" width="6.4" height="1.8" fill="#f0f0f0" />
<rect x="1137.5" y="126.5" width="4" height="1.8" fill="#f0f0f0" />
<text x="1149" y="130" font-size="12.4" fill="#e2e2e2" textLength="38" lengthAdjust="spacingAndGlyphs" >Aligner</text>
<rect x="1205.6" y="120.0" width="2.4" height="2.3" fill="#ececec" />
<rect x="1205.6" y="122.9" width="2.4" height="2.3" fill="#ececec" />
<rect x="1205.6" y="125.8" width="2.4" height="2.3" fill="#ececec" />
<rect x="1208.6999999999998" y="120.0" width="2.4" height="2.3" fill="#ececec" />
<rect x="1208.6999999999998" y="122.9" width="2.4" height="2.3" fill="#ececec" />
<rect x="1208.6999999999998" y="125.8" width="2.4" height="2.3" fill="#ececec" />
<rect x="1211.8" y="120.0" width="2.4" height="2.3" fill="#ececec" />
<rect x="1211.8" y="122.9" width="2.4" height="2.3" fill="#ececec" />
<rect x="1211.8" y="125.8" width="2.4" height="2.3" fill="#ececec" />
<text x="1219.3" y="130" font-size="12.4" fill="#e2e2e2" textLength="28" lengthAdjust="spacingAndGlyphs" >Grille</text>
<circle cx="1270.2" cy="124.3" r="4.2" fill="none" stroke="#ececec" stroke-width="1.8" stroke-dasharray="2.2 1.1"/>
<text x="1279.8" y="130" font-size="12.4" fill="#e2e2e2" textLength="49" lengthAdjust="spacingAndGlyphs" >Circulaire</text>
<text x="1125.6" y="150" font-size="12.3" fill="#ececec" font-weight="bold" textLength="40.4" lengthAdjust="spacingAndGlyphs" >Aligner</text>
<rect x="1143.5" y="163.5" width="10.5" height="10.5" fill="none" stroke="#12a01a" stroke-width="1.1" stroke-dasharray="1 1.1"/>
<rect x="1145.8" y="165.8" width="5.4" height="5.4" fill="#f2f2f2" />
<text x="1164.8" y="173" font-size="12.3" fill="#d4d4d4" textLength="236.8" lengthAdjust="spacingAndGlyphs" >Troisième clic pour les poignées d&#x27;alignement</text>
<rect x="1143.3" y="189.2" width="1.6" height="1.6" fill="#12a01a" rx="0.8" />
<rect x="1153" y="189.2" width="1.6" height="1.6" fill="#12a01a" rx="0.8" />
<rect x="1143.3" y="199" width="1.6" height="1.6" fill="#12a01a" rx="0.8" />
<rect x="1153" y="199" width="1.6" height="1.6" fill="#12a01a" rx="0.8" />
<rect x="1145.8" y="190.8" width="3.2" height="1.2" fill="#f0f0f0" />
<rect x="1147" y="193.8" width="4.6" height="1.2" fill="#f0f0f0" />
<rect x="1145.8" y="196.8" width="5.4" height="1.2" fill="#f0f0f0" />
<text x="1164.8" y="199" font-size="12.3" fill="#d4d4d4" textLength="196.6" lengthAdjust="spacingAndGlyphs" >Bouger/aligner la sélection en groupe</text>
<text x="1135.4" y="227" font-size="12.3" fill="#d4d4d4" textLength="83" lengthAdjust="spacingAndGlyphs" >Relativement à :</text>
<rect x="1222.5" y="209.5" width="122.5" height="25" rx="4" fill="#2f2f2f" stroke="#242424" stroke-width="1"/>
<text x="1226.4" y="227" font-size="12.3" fill="#e2e2e2" textLength="92.4" lengthAdjust="spacingAndGlyphs" >Zone de sélection</text>
<path d="M1331 219.5 L1340.5 219.5 L1335.7 224.3 Z" fill="#f0f0f0" />
<rect x="1142.5" y="244.2" width="8" height="2.2" fill="#eeeeee" />
<rect x="1144.5" y="247.5" width="6" height="2.2" fill="#eeeeee" />
<rect x="1142.5" y="250.79999999999998" width="8" height="2.2" fill="#eeeeee" />
<rect x="1151.5" y="243.5" width="0.9" height="11" fill="#22a02a" />
<rect x="1170.5" y="244.2" width="8" height="2.2" fill="#eeeeee" />
<rect x="1170.5" y="247.5" width="6" height="2.2" fill="#eeeeee" />
<rect x="1170.5" y="250.79999999999998" width="8" height="2.2" fill="#eeeeee" />
<rect x="1169.2" y="243.5" width="0.9" height="11" fill="#22a02a" />
<rect x="1197.5" y="244.2" width="3.4" height="2.2" fill="#eeeeee" />
<rect x="1197.5" y="247.5" width="3.4" height="2.2" fill="#eeeeee" />
<rect x="1197.5" y="250.79999999999998" width="3.4" height="2.2" fill="#eeeeee" />
<rect x="1202.5" y="244.2" width="3.4" height="2.2" fill="#eeeeee" />
<rect x="1202.5" y="247.5" width="3.4" height="2.2" fill="#eeeeee" />
<rect x="1202.5" y="250.79999999999998" width="3.4" height="2.2" fill="#eeeeee" />
<rect x="1201.5" y="243.5" width="0.9" height="11" fill="#22a02a" />
<rect x="1224.5" y="244.2" width="8" height="2.2" fill="#eeeeee" />
<rect x="1226.5" y="247.5" width="6" height="2.2" fill="#eeeeee" />
<rect x="1224.5" y="250.79999999999998" width="8" height="2.2" fill="#eeeeee" />
<rect x="1232.8" y="243.5" width="0.9" height="11" fill="#22a02a" />
<rect x="1252" y="244.2" width="8" height="2.2" fill="#eeeeee" />
<rect x="1252" y="247.5" width="6" height="2.2" fill="#eeeeee" />
<rect x="1252" y="250.79999999999998" width="8" height="2.2" fill="#eeeeee" />
<rect x="1250.5" y="243.5" width="0.9" height="11" fill="#22a02a" />
<text x="1277" y="253" font-size="10" fill="#eeeeee" font-family="Liberation Serif">ÿ</text>
<rect x="1279" y="244" width="0.9" height="10" fill="#22a02a" />
<rect x="1144.0" y="270" width="2.2" height="7" fill="#eeeeee" />
<rect x="1147.3" y="272" width="2.2" height="5" fill="#eeeeee" />
<rect x="1150.6" y="270" width="2.2" height="7" fill="#eeeeee" />
<rect x="1142.5" y="278.3" width="11" height="0.9" fill="#22a02a" />
<rect x="1171.0" y="270.5" width="2.2" height="7" fill="#eeeeee" />
<rect x="1174.3" y="270.5" width="2.2" height="5" fill="#eeeeee" />
<rect x="1177.6" y="270.5" width="2.2" height="7" fill="#eeeeee" />
<rect x="1170" y="269.5" width="11" height="0.9" fill="#22a02a" />
<rect x="1197.5" y="269.5" width="2.2" height="3.4" fill="#eeeeee" />
<rect x="1200.8" y="269.5" width="2.2" height="3.4" fill="#eeeeee" />
<rect x="1204.1" y="269.5" width="2.2" height="3.4" fill="#eeeeee" />
<rect x="1197.5" y="275" width="2.2" height="3.4" fill="#eeeeee" />
<rect x="1200.8" y="275" width="2.2" height="3.4" fill="#eeeeee" />
<rect x="1204.1" y="275" width="2.2" height="3.4" fill="#eeeeee" />
<rect x="1196.5" y="274.2" width="11" height="0.9" fill="#22a02a" />
<rect x="1223.5" y="270.5" width="2.2" height="7" fill="#eeeeee" />
<rect x="1226.8" y="272.5" width="2.2" height="5" fill="#eeeeee" />
<rect x="1230.1" y="270.5" width="2.2" height="7" fill="#eeeeee" />
<rect x="1222.5" y="278.3" width="11" height="0.9" fill="#22a02a" />
<rect x="1250.5" y="270.5" width="2.2" height="7" fill="#eeeeee" />
<rect x="1253.8" y="270.5" width="2.2" height="5" fill="#eeeeee" />
<rect x="1257.1" y="270.5" width="2.2" height="7" fill="#eeeeee" />
<rect x="1249.3" y="269.5" width="11" height="0.9" fill="#22a02a" />
<text x="1276" y="277.5" font-size="9" fill="#eeeeee" font-family="Liberation Serif">ya</text>
<rect x="1275.5" y="278.6" width="11" height="0.9" fill="#22a02a" />
<text x="1125.6" y="309.5" font-size="12.3" fill="#ececec" font-weight="bold" textLength="55" lengthAdjust="spacingAndGlyphs" >Distribuer</text>
<rect x="1144" y="323.5" width="3.4" height="7.5" fill="#eeeeee" />
<rect x="1148.5" y="324.5" width="3.8" height="3.8" fill="#eeeeee" />
<rect x="1144.8" y="319.8" width="0.9" height="3" fill="#22a02a" />
<rect x="1148.8" y="319.8" width="0.9" height="3" fill="#22a02a" />
<rect x="1170.5" y="323.5" width="3.4" height="7.5" fill="#eeeeee" />
<rect x="1175" y="324.5" width="3.8" height="3.8" fill="#eeeeee" />
<rect x="1172" y="319.8" width="0.9" height="3" fill="#22a02a" />
<rect x="1176.5" y="319.8" width="0.9" height="3" fill="#22a02a" />
<rect x="1197.5" y="324.5" width="3.8" height="3.8" fill="#eeeeee" />
<rect x="1202" y="323.5" width="3.4" height="7.5" fill="#eeeeee" />
<rect x="1198.5" y="319.8" width="0.9" height="3" fill="#22a02a" />
<rect x="1203" y="319.8" width="0.9" height="3" fill="#22a02a" />
<rect x="1222.5" y="323.5" width="1.8" height="7.5" fill="#eeeeee" />
<rect x="1226.5" y="324" width="3" height="4.5" fill="#eeeeee" />
<rect x="1231.5" y="323.5" width="1.8" height="7.5" fill="#eeeeee" />
<rect x="1222.5" y="320.6" width="11" height="0.8" fill="#22a02a" />
<text x="1249" y="332" font-size="10" fill="#eeeeee" font-family="Liberation Serif">ay</text>
<rect x="1249.5" y="320.5" width="6" height="0.8" fill="#22a02a" />
<rect x="1145" y="349" width="7.5" height="3.6" fill="#eeeeee" />
<rect x="1145.5" y="353.6" width="4" height="3.4" fill="#eeeeee" />
<rect x="1141.5" y="350.2" width="3" height="0.9" fill="#22a02a" />
<rect x="1141.5" y="354.8" width="3" height="0.9" fill="#22a02a" />
<rect x="1172" y="349" width="7.5" height="3.6" fill="#eeeeee" />
<rect x="1172.5" y="353.6" width="4" height="3.4" fill="#eeeeee" />
<rect x="1168.5" y="351.2" width="3" height="0.9" fill="#22a02a" />
<rect x="1168.5" y="355.8" width="3" height="0.9" fill="#22a02a" />
<rect x="1198.5" y="349.5" width="4" height="3.4" fill="#eeeeee" />
<rect x="1198" y="353.4" width="7.5" height="3.6" fill="#eeeeee" />
<rect x="1195.5" y="352.8" width="3" height="0.9" fill="#22a02a" />
<rect x="1195.5" y="357" width="3" height="0.9" fill="#22a02a" />
<rect x="1224.5" y="347.5" width="5" height="1.8" fill="#eeeeee" />
<rect x="1224.5" y="351.7" width="5" height="2.6" fill="#eeeeee" />
<rect x="1224.5" y="356.5" width="5" height="1.8" fill="#eeeeee" />
<rect x="1222.5" y="348" width="0.9" height="10" fill="#22a02a" />
<text x="1254" y="351.5" font-size="8" fill="#eeeeee" font-family="Liberation Serif">a</text>
<text x="1253" y="358.5" font-size="9" fill="#eeeeee" font-family="Liberation Serif">y</text>
<rect x="1249.5" y="348.5" width="0.9" height="9" fill="#22a02a" />
<text x="1125.6" y="388.4" font-size="12.3" fill="#ececec" font-weight="bold" textLength="53" lengthAdjust="spacingAndGlyphs" >Organiser</text>
<path d="M1144.5 403.5 L1149 401.5 L1151.5 406.5 L1149.5 410.5 L1145.5 408 Z" fill="none" stroke="#eeeeee" stroke-width="1" />
<rect x="1143.5" y="402.5" width="2" height="2" fill="#eeeeee" />
<rect x="1148" y="400.5" width="2" height="2" fill="#eeeeee" />
<rect x="1150.5" y="405.5" width="2" height="2" fill="#eeeeee" />
<rect x="1148.5" y="409.5" width="2" height="2" fill="#eeeeee" />
<rect x="1144.5" y="407" width="2" height="2" fill="#eeeeee" />
<rect x="1171" y="401.5" width="3.2" height="3.2" fill="#eeeeee" />
<rect x="1175.8" y="407" width="3.2" height="3.2" fill="#eeeeee" />
<path d="M1174 402.5 Q1177.5 402.5 1177.5 406" fill="none" stroke="#eeeeee" stroke-width="0.9" />
<rect x="1171.5" y="406.5" width="2.8" height="3" fill="#2aa0f0" />
<rect x="1197.7" y="401.5" width="3.2" height="3.2" fill="#eeeeee" />
<rect x="1202.5" y="407" width="3.2" height="3.2" fill="#eeeeee" />
<path d="M1200.7 402.5 Q1204.2 402.5 1204.2 406" fill="none" stroke="#eeeeee" stroke-width="0.9" />
<rect x="1198.2" y="406.5" width="2.8" height="3" fill="#2aa0f0" />
<rect x="1224.3" y="401.5" width="3.2" height="3.2" fill="#eeeeee" />
<rect x="1229.1" y="407" width="3.2" height="3.2" fill="#eeeeee" />
<path d="M1227.3 402.5 Q1230.8 402.5 1230.8 406" fill="none" stroke="#eeeeee" stroke-width="0.9" />
<rect x="1224.8" y="406.5" width="2.8" height="3" fill="#2aa0f0" />
<rect x="1251.0" y="402.0" width="2.4" height="2.2" fill="#eeeeee" />
<rect x="1250.2" y="405.4" width="2.4" height="2.2" fill="#eeeeee" />
<rect x="1254.1" y="402.8" width="2.4" height="2.2" fill="#eeeeee" />
<rect x="1253.3" y="406.2" width="2.4" height="2.2" fill="#eeeeee" />
<rect x="1257.2" y="402.0" width="2.4" height="2.2" fill="#eeeeee" />
<rect x="1256.4" y="405.4" width="2.4" height="2.2" fill="#eeeeee" />
<rect x="1252" y="408.7" width="2.4" height="2.2" fill="#eeeeee" />
<rect x="1255" y="409" width="2.4" height="2.2" fill="#eeeeee" />
<path d="M1277.5 406 L1282.5 402.2 M1277.5 406 L1282.5 409.8" fill="none" stroke="#eeeeee" stroke-width="0.9" />
<rect x="1276.5" y="405" width="2" height="2" fill="#eeeeee" />
<rect x="1282" y="401.2" width="2.2" height="2.2" fill="#eeeeee" />
<rect x="1282" y="408.8" width="2.2" height="2.2" fill="#eeeeee" />
<rect x="1283" y="405" width="1.8" height="2" fill="#eeeeee" />
<text x="1125.6" y="440.6" font-size="12.3" fill="#ececec" font-weight="bold" textLength="169.5" lengthAdjust="spacingAndGlyphs" >Supprimer les chevauchements</text>
<text x="1135.5" y="463.4" font-size="12.3" fill="#b8b8b8" textLength="12.5" lengthAdjust="spacingAndGlyphs" >H :</text>
<rect x="1150.4" y="446.5" width="73.6" height="24.5" rx="5" fill="#2d2d2d" stroke="#262626" stroke-width="1"/>
<line x1="1186.2" y1="447" x2="1186.2" y2="470.5" stroke="#292929" stroke-width="1" />
<line x1="1205.1" y1="447" x2="1205.1" y2="470.5" stroke="#292929" stroke-width="1" />
<line x1="1189.75" y1="458.75" x2="1200.5500000000002" y2="458.75" stroke="#e8e8e8" stroke-width="1.2" />
<line x1="1209.1499999999999" y1="458.75" x2="1219.95" y2="458.75" stroke="#e8e8e8" stroke-width="1.2" />
<line x1="1214.55" y1="453.35" x2="1214.55" y2="464.15" stroke="#e8e8e8" stroke-width="1.2" />
<text x="1157" y="463.4" font-size="12.5" fill="#d8d8d8" >0</text>
<text x="1228.3" y="463.4" font-size="12.3" fill="#b8b8b8" textLength="17.5" lengthAdjust="spacingAndGlyphs" >_V :</text>
<rect x="1246.3" y="446.5" width="73.6" height="24.5" rx="5" fill="#2d2d2d" stroke="#262626" stroke-width="1"/>
<line x1="1282.1" y1="447" x2="1282.1" y2="470.5" stroke="#292929" stroke-width="1" />
<line x1="1301.0" y1="447" x2="1301.0" y2="470.5" stroke="#292929" stroke-width="1" />
<line x1="1285.6499999999999" y1="458.75" x2="1296.45" y2="458.75" stroke="#e8e8e8" stroke-width="1.2" />
<line x1="1305.0499999999997" y1="458.75" x2="1315.85" y2="458.75" stroke="#e8e8e8" stroke-width="1.2" />
<line x1="1310.4499999999998" y1="453.35" x2="1310.4499999999998" y2="464.15" stroke="#e8e8e8" stroke-width="1.2" />
<text x="1252.9" y="463.4" font-size="12.5" fill="#d8d8d8" >0</text>
<rect x="1332.5" y="456" width="2.2" height="8" fill="#f2f2f2" />
<rect x="1336" y="452.5" width="2.2" height="11.5" fill="#f2f2f2" />
<rect x="1339.5" y="452.5" width="2.2" height="11.5" fill="#f2f2f2" />
<rect x="1332.5" y="450.8" width="2.2" height="2" fill="#f2f2f2" />
<rect x="1461.5" y="79" width="38.5" height="664" fill="#333333" />
<line x1="1461.5" y1="79" x2="1461.5" y2="743" stroke="#2e2e2e" stroke-width="1" />
<line x1="1466" y1="196" x2="1498" y2="196" stroke="#2e2e2e" stroke-width="1" />
<line x1="1466" y1="261.6" x2="1498" y2="261.6" stroke="#2e2e2e" stroke-width="1" />
<line x1="1466" y1="421" x2="1498" y2="421" stroke="#2e2e2e" stroke-width="1" />
<line x1="1466" y1="540" x2="1498" y2="540" stroke="#2e2e2e" stroke-width="1" />
<line x1="1466" y1="634" x2="1498" y2="634" stroke="#2e2e2e" stroke-width="1" />
<line x1="1466" y1="701" x2="1498" y2="701" stroke="#2e2e2e" stroke-width="1" />
<path d="M1477.5 90.5 L1484.5 90.5 L1487.5 93.5 L1487.5 102.5 L1477.5 102.5 Z" fill="none" stroke="#f0f0f0" stroke-width="1.6" />
<circle cx="1488.5" cy="90" r="1.5" fill="#22a02a"/>
<path d="M1476.5 117 L1481 117 L1482.5 119 L1488 119 L1488 128 L1476.5 128 Z" fill="#f0f0f0" />
<path d="M1478 121.5 L1489.5 121.5 L1488 128 L1476.5 128 Z" fill="#bdbdbd" />
<rect x="1476.5" y="150.5" width="12" height="6" fill="#f0f0f0" rx="1" />
<rect x="1478.5" y="152" width="8" height="2" fill="#333" />
<rect x="1481.8" y="142" width="1.8" height="6" fill="#22a02a" />
<path d="M1479.5 146.5 L1482.7 150 L1486 146.5 Z" fill="#22a02a" />
<rect x="1476.5" y="173.5" width="12" height="5.5" fill="#f0f0f0" rx="1" />
<rect x="1479" y="169.5" width="7" height="3" fill="#f0f0f0" />
<rect x="1479" y="179.5" width="7" height="3" fill="#f0f0f0" />
<path d="M1478.5 213 L1478.5 209.5 L1485 209.5 L1488 212.5 L1488 221.5 L1478.5 221.5 L1478.5 219" fill="none" stroke="#f0f0f0" stroke-width="1.6" />
<rect x="1475.5" y="215.2" width="7" height="1.8" fill="#22a02a" />
<path d="M1481.5 213 L1484.5 216.1 L1481.5 219.2 Z" fill="#22a02a" />
<path d="M1486 240.5 L1486 239 L1483 236 L1476.5 236 L1476.5 248 L1486 248 L1486 246" fill="none" stroke="#f0f0f0" stroke-width="1.6" />
<rect x="1482" y="242.2" width="5.5" height="1.8" fill="#22a02a" />
<path d="M1487 240 L1490 243.1 L1487 246.2 Z" fill="#22a02a" />
<path d="M1477 281 L1485 281 Q1488.5 281 1488.5 284 Q1488.5 287 1485 287 L1482 287" fill="none" stroke="#7a7a7a" stroke-width="1.4" />
<path d="M1479.5 278 L1476.5 281 L1479.5 284" fill="none" stroke="#7a7a7a" stroke-width="1.4" />
<path d="M1488 308 L1480 308 Q1476.5 308 1476.5 311 Q1476.5 314 1480 314 L1483 314" fill="none" stroke="#7a7a7a" stroke-width="1.4" />
<path d="M1485.5 305 L1488.5 308 L1485.5 311" fill="none" stroke="#7a7a7a" stroke-width="1.4" />
<rect x="1477" y="342" width="7" height="6.5" fill="#f0f0f0" />
<rect x="1480.5" y="345.5" width="8" height="7" fill="#f0f0f0" stroke="#333" stroke-width="1"/>
<circle cx="1479" cy="378" r="2.2" fill="none" stroke="#f0f0f0" stroke-width="1.4"/><circle cx="1486" cy="378" r="2.2" fill="none" stroke="#f0f0f0" stroke-width="1.4"/>
<path d="M1479.8 376 L1485 368.5 M1485.2 376 L1480 368.5" fill="none" stroke="#f0f0f0" stroke-width="1.3" />
<rect x="1477" y="396.5" width="11" height="11.5" fill="#f0f0f0" rx="1" />
<rect x="1479" y="399" width="7" height="7.5" fill="#555" />
<rect x="1479.5" y="395" width="6" height="2.5" fill="#f0f0f0" />
<circle cx="1481.5" cy="439.5" r="5.2" fill="#f0f0f0"/>
<line x1="1485" y1="443" x2="1488.5" y2="446.5" stroke="#f0f0f0" stroke-width="2" />
<rect x="1479" y="437" width="5" height="5" fill="#333" stroke="#f0f0f0" stroke-width="0.6"/>
<circle cx="1481.5" cy="466.5" r="5.2" fill="#f0f0f0"/>
<line x1="1485" y1="470" x2="1488.5" y2="473.5" stroke="#f0f0f0" stroke-width="2" />
<rect x="1480.5" y="465.5" width="4.5" height="4.5" fill="#333" />
<circle cx="1481.5" cy="493.5" r="5.2" fill="#f0f0f0"/>
<line x1="1485" y1="497" x2="1488.5" y2="500.5" stroke="#f0f0f0" stroke-width="2" />
<rect x="1479.5" y="490" width="4" height="7" fill="#333" stroke="#f0f0f0" stroke-width="0.8"/>
<path d="M1476.5 518 L1476.5 516 L1478.5 516 M1486.5 516 L1488.5 516 L1488.5 518 M1488.5 524 L1488.5 526 L1486.5 526 M1478.5 526 L1476.5 526 L1476.5 524" fill="none" stroke="#bbb" stroke-width="0.8" />
<rect x="1477.5" y="517" width="10" height="8" fill="none" stroke="#f0f0f0" stroke-width="1"/>
<path d="M1482.5 519 L1482.5 523 M1480.5 521 L1484.5 521" fill="none" stroke="#f0f0f0" stroke-width="1" />
<rect x="1476.5" y="553.5" width="7" height="6.5" fill="#f0f0f0" />
<rect x="1480.5" y="557" width="8" height="7" fill="#22a02a" stroke="#333" stroke-width="0.8"/>
<rect x="1476.5" y="581" width="7" height="6.5" fill="#f0f0f0" />
<rect x="1480.5" y="584.5" width="8" height="8" fill="#333" stroke="#f0f0f0" stroke-width="1.2"/>
<rect x="1483" y="587" width="3.5" height="3.5" fill="#f0f0f0" />
<rect x="1476.5" y="609" width="7" height="6.5" fill="#f0f0f0" />
<rect x="1480.5" y="612.5" width="8" height="8" fill="#333" stroke="#f0f0f0" stroke-width="1.2"/>
<rect x="1483" y="615" width="3.5" height="3.5" fill="#f0f0f0" />
<rect x="1475.7" y="645.7" width="1.8" height="1.8" fill="#22a02a" />
<rect x="1487.2" y="645.7" width="1.8" height="1.8" fill="#22a02a" />
<rect x="1475.7" y="657.7" width="1.8" height="1.8" fill="#22a02a" />
<rect x="1487.2" y="657.7" width="1.8" height="1.8" fill="#22a02a" />
<circle cx="1480.8" cy="650.8" r="3.5" fill="#f0f0f0"/>
<path d="M1481 657 L1487 651 L1487 657 Z" fill="#cfcfcf" />
<rect x="1475.7" y="673.7" width="1.8" height="1.8" fill="#ddd" />
<rect x="1487.2" y="673.7" width="1.8" height="1.8" fill="#ddd" />
<rect x="1475.7" y="685.7" width="1.8" height="1.8" fill="#ddd" />
<rect x="1487.2" y="685.7" width="1.8" height="1.8" fill="#ddd" />
<circle cx="1480.8" cy="678.8" r="3.5" fill="#f0f0f0"/>
<path d="M1481 685 L1487 679 L1487 685 Z" fill="#999" />
<path d="M1480.5 719.5 L1480.5 729.5 L1485.5 724.5 Z" fill="#f0f0f0" />
<rect x="0" y="743" width="1500" height="20" fill="#333333" />
<rect x="0" y="749.8" width="13.4" height="13" fill="#ffffff" />
<path d="M1 750.5 L12.5 762 M12.5 750.5 L1 762" fill="none" stroke="#b02a2a" stroke-width="1.2" />
<rect x="14.0" y="749.8" width="12.2" height="13" fill="#000000" />
<rect x="27.29" y="749.8" width="12.2" height="13" fill="#1a1a1a" />
<rect x="40.58" y="749.8" width="12.2" height="13" fill="#333333" />
<rect x="53.87" y="749.8" width="12.2" height="13" fill="#4d4d4d" />
<rect x="67.16" y="749.8" width="12.2" height="13" fill="#666666" />
<rect x="80.45" y="749.8" width="12.2" height="13" fill="#808080" />
<rect x="93.74" y="749.8" width="12.2" height="13" fill="#999999" />
<rect x="107.03" y="749.8" width="12.2" height="13" fill="#b3b3b3" />
<rect x="120.32" y="749.8" width="12.2" height="13" fill="#cccccc" />
<rect x="133.61" y="749.8" width="12.2" height="13" fill="#e6e6e6" />
<rect x="146.9" y="749.8" width="12.2" height="13" fill="#ececec" />
<rect x="160.19" y="749.8" width="12.2" height="13" fill="#f2f2f2" />
<rect x="173.48" y="749.8" width="12.2" height="13" fill="#f9f9f9" />
<rect x="186.77" y="749.8" width="12.2" height="13" fill="#ffffff" />
<rect x="200.06" y="749.8" width="12.2" height="13" fill="#800000" />
<rect x="213.35" y="749.8" width="12.2" height="13" fill="#ff0000" />
<rect x="226.64" y="749.8" width="12.2" height="13" fill="#808000" />
<rect x="239.93" y="749.8" width="12.2" height="13" fill="#ffff00" />
<rect x="253.22" y="749.8" width="12.2" height="13" fill="#008000" />
<rect x="266.51" y="749.8" width="12.2" height="13" fill="#00ff00" />
<rect x="279.8" y="749.8" width="12.2" height="13" fill="#008080" />
<rect x="293.09" y="749.8" width="12.2" height="13" fill="#00ffff" />
<rect x="306.38" y="749.8" width="12.2" height="13" fill="#000080" />
<rect x="319.67" y="749.8" width="12.2" height="13" fill="#0000ff" />
<rect x="332.96" y="749.8" width="12.2" height="13" fill="#800080" />
<rect x="346.25" y="749.8" width="12.2" height="13" fill="#ff00ff" />
<rect x="359.54" y="749.8" width="12.2" height="13" fill="#2b0000" />
<rect x="372.83" y="749.8" width="12.2" height="13" fill="#550000" />
<rect x="386.12" y="749.8" width="12.2" height="13" fill="#800000" />
<rect x="399.41" y="749.8" width="12.2" height="13" fill="#aa0000" />
<rect x="412.7" y="749.8" width="12.2" height="13" fill="#d40000" />
<rect x="425.99" y="749.8" width="12.2" height="13" fill="#ff0000" />
<rect x="439.28" y="749.8" width="12.2" height="13" fill="#ff2a2a" />
<rect x="452.57" y="749.8" width="12.2" height="13" fill="#ff5555" />
<rect x="465.86" y="749.8" width="12.2" height="13" fill="#ff8080" />
<rect x="479.15" y="749.8" width="12.2" height="13" fill="#ffaaaa" />
<rect x="492.44" y="749.8" width="12.2" height="13" fill="#ffd5d5" />
<rect x="505.73" y="749.8" width="12.2" height="13" fill="#280b0b" />
<rect x="519.02" y="749.8" width="12.2" height="13" fill="#501616" />
<rect x="532.31" y="749.8" width="12.2" height="13" fill="#782121" />
<rect x="545.6" y="749.8" width="12.2" height="13" fill="#a02c2c" />
<rect x="558.89" y="749.8" width="12.2" height="13" fill="#c83737" />
<rect x="572.18" y="749.8" width="12.2" height="13" fill="#d35f5f" />
<rect x="585.47" y="749.8" width="12.2" height="13" fill="#de8787" />
<rect x="598.76" y="749.8" width="12.2" height="13" fill="#e9afaf" />
<rect x="612.05" y="749.8" width="12.2" height="13" fill="#f4d7d7" />
<rect x="625.34" y="749.8" width="12.2" height="13" fill="#241c1c" />
<rect x="638.63" y="749.8" width="12.2" height="13" fill="#483737" />
<rect x="651.92" y="749.8" width="12.2" height="13" fill="#6c5353" />
<rect x="665.21" y="749.8" width="12.2" height="13" fill="#916f6f" />
<rect x="678.5" y="749.8" width="12.2" height="13" fill="#ac9393" />
<rect x="691.79" y="749.8" width="12.2" height="13" fill="#c8b7b7" />
<rect x="705.08" y="749.8" width="12.2" height="13" fill="#e3dbdb" />
<rect x="718.37" y="749.8" width="12.2" height="13" fill="#2b1100" />
<rect x="731.66" y="749.8" width="12.2" height="13" fill="#552200" />
<rect x="744.95" y="749.8" width="12.2" height="13" fill="#803300" />
<rect x="758.24" y="749.8" width="12.2" height="13" fill="#aa4400" />
<rect x="771.53" y="749.8" width="12.2" height="13" fill="#d45500" />
<rect x="784.82" y="749.8" width="12.2" height="13" fill="#ff6600" />
<rect x="798.11" y="749.8" width="12.2" height="13" fill="#ff7f2a" />
<rect x="811.4" y="749.8" width="12.2" height="13" fill="#ff9955" />
<rect x="824.69" y="749.8" width="12.2" height="13" fill="#ffb380" />
<rect x="837.98" y="749.8" width="12.2" height="13" fill="#ffccaa" />
<rect x="851.27" y="749.8" width="12.2" height="13" fill="#ffe6d5" />
<rect x="864.56" y="749.8" width="12.2" height="13" fill="#28170b" />
<rect x="877.85" y="749.8" width="12.2" height="13" fill="#502d16" />
<rect x="891.14" y="749.8" width="12.2" height="13" fill="#784421" />
<rect x="904.43" y="749.8" width="12.2" height="13" fill="#a05a2c" />
<rect x="917.72" y="749.8" width="12.2" height="13" fill="#c87137" />
<rect x="931.01" y="749.8" width="12.2" height="13" fill="#d38d5f" />
<rect x="944.3" y="749.8" width="12.2" height="13" fill="#deaa87" />
<rect x="957.59" y="749.8" width="12.2" height="13" fill="#e9c6af" />
<rect x="970.88" y="749.8" width="12.2" height="13" fill="#f4e3d7" />
<rect x="984.17" y="749.8" width="12.2" height="13" fill="#241f1c" />
<rect x="997.46" y="749.8" width="12.2" height="13" fill="#483e37" />
<rect x="1010.75" y="749.8" width="12.2" height="13" fill="#6c5d53" />
<rect x="1024.04" y="749.8" width="12.2" height="13" fill="#917c6f" />
<rect x="1037.33" y="749.8" width="12.2" height="13" fill="#ac9d93" />
<rect x="1050.62" y="749.8" width="12.2" height="13" fill="#c8beb7" />
<rect x="1063.91" y="749.8" width="12.2" height="13" fill="#e3dedb" />
<rect x="1077.2" y="749.8" width="12.2" height="13" fill="#2b2200" />
<rect x="1090.49" y="749.8" width="12.2" height="13" fill="#554400" />
<rect x="1103.78" y="749.8" width="12.2" height="13" fill="#806600" />
<rect x="1117.07" y="749.8" width="12.2" height="13" fill="#aa8800" />
<rect x="1130.36" y="749.8" width="12.2" height="13" fill="#d4aa00" />
<rect x="1143.65" y="749.8" width="12.2" height="13" fill="#ffcc00" />
<rect x="1156.94" y="749.8" width="12.2" height="13" fill="#ffd42a" />
<rect x="1170.23" y="749.8" width="12.2" height="13" fill="#ffdd55" />
<rect x="1183.52" y="749.8" width="12.2" height="13" fill="#ffe680" />
<rect x="1196.81" y="749.8" width="12.2" height="13" fill="#ffeeaa" />
<rect x="1210.1" y="749.8" width="12.2" height="13" fill="#fff6d5" />
<rect x="1223.39" y="749.8" width="12.2" height="13" fill="#28220b" />
<rect x="1236.68" y="749.8" width="12.2" height="13" fill="#504416" />
<rect x="1249.97" y="749.8" width="12.2" height="13" fill="#786721" />
<rect x="1263.26" y="749.8" width="12.2" height="13" fill="#a0892c" />
<rect x="1276.55" y="749.8" width="12.2" height="13" fill="#c8ab37" />
<rect x="1289.84" y="749.8" width="12.2" height="13" fill="#d3bc5f" />
<rect x="1303.13" y="749.8" width="12.2" height="13" fill="#decd87" />
<rect x="1316.42" y="749.8" width="12.2" height="13" fill="#e9ddaf" />
<rect x="1329.71" y="749.8" width="12.2" height="13" fill="#f4eed7" />
<rect x="1343.0" y="749.8" width="12.2" height="13" fill="#24221c" />
<rect x="1356.29" y="749.8" width="12.2" height="13" fill="#484537" />
<rect x="1369.58" y="749.8" width="12.2" height="13" fill="#6c6753" />
<rect x="1382.87" y="749.8" width="12.2" height="13" fill="#918a6f" />
<rect x="1396.16" y="749.8" width="12.2" height="13" fill="#aca793" />
<rect x="1409.45" y="749.8" width="12.2" height="13" fill="#c8c4b7" />
<rect x="1422.74" y="749.8" width="12.2" height="13" fill="#e3e2db" />
<path d="M1442 758.5 L1446.8 753.8 L1451.6 758.5" fill="none" stroke="#e8e8e8" stroke-width="1.5" />
<path d="M1466 753.8 L1470.8 758.5 L1475.6 753.8" fill="none" stroke="#e8e8e8" stroke-width="1.5" />
<rect x="1483.8" y="742.5" width="15.2" height="21" rx="3" fill="#2a2a2a" stroke="#232323" stroke-width="1"/>
<rect x="1486" y="748.5" width="11" height="1.5" fill="#eeeeee" />
<rect x="1486" y="753" width="11" height="1.5" fill="#eeeeee" />
<rect x="1486" y="757.5" width="11" height="1.5" fill="#eeeeee" />
<rect x="0" y="763" width="1500" height="35" fill="#333333" />
<text x="17.3" y="778" font-size="12.3" fill="#d4d4d4" textLength="32" lengthAdjust="spacingAndGlyphs" >Fond :</text>
<text x="1.3" y="794" font-size="12.3" fill="#d4d4d4" textLength="48" lengthAdjust="spacingAndGlyphs" >Contour :</text>
<text x="69.5" y="778" font-size="12.3" fill="#d4d4d4" >N/A</text>
<text x="69.5" y="794" font-size="12.3" fill="#d4d4d4" >N/A</text>
<text x="134.5" y="786" font-size="12.3" fill="#cfcfcf" textLength="14.4" lengthAdjust="spacingAndGlyphs" >O :</text>
<rect x="150.9" y="764.9" width="55" height="31.200000000000003" rx="5" fill="#2d2d2d" stroke="#262626" stroke-width="1"/>
<line x1="180.9" y1="765.4" x2="180.9" y2="795.6" stroke="#292929" stroke-width="1" />
<line x1="194.1" y1="765.4" x2="194.1" y2="795.6" stroke="#292929" stroke-width="1" />
<line x1="181.75" y1="780.5" x2="192.25" y2="780.5" stroke="#5a5a5a" stroke-width="1.2" />
<line x1="194.75" y1="780.5" x2="205.25" y2="780.5" stroke="#5a5a5a" stroke-width="1.2" />
<line x1="200.0" y1="775.25" x2="200.0" y2="785.75" stroke="#5a5a5a" stroke-width="1.2" />
<text x="156" y="786" font-size="12.5" fill="#7a7a7a" textLength="19.5" lengthAdjust="spacingAndGlyphs" >100</text>
<rect x="216.9" y="772" width="2.8" height="16.6" fill="#c8c8c0" />
<text x="224.3" y="785.6" font-size="12.3" fill="#d4d4d4" >0</text>
<path d="M246.8 780.5 Q252.4 774 258 780.5 Q252.4 787 246.8 780.5 Z" fill="none" stroke="#f0f0f0" stroke-width="1.6" />
<circle cx="252.4" cy="780.5" r="1.6" fill="#f0f0f0"/>
<path d="M249 775.8 L248.3 774.4 M252.4 775 L252.4 773.5 M255.8 775.8 L256.5 774.4" fill="none" stroke="#f0f0f0" stroke-width="1" />
<rect x="276.3" y="780" width="7.8" height="6.5" fill="#f0f0f0" rx="0.5" />
<path d="M281.8 780 L281.8 777.8 Q281.8 775.8 284 775.8 Q286.2 775.8 286.2 777.8 L286.2 779" fill="none" stroke="#f0f0f0" stroke-width="1.5" />
<line x1="295.5" y1="765" x2="295.5" y2="796" stroke="#303030" stroke-width="1" />
<text x="300.8" y="785.6" font-size="12.3" fill="#f0f0f0" font-weight="bold" textLength="18.2" lengthAdjust="spacingAndGlyphs" >Alt:</text>
<text x="321.7" y="785.6" font-size="12.3" fill="#d4d4d4" textLength="389.3" lengthAdjust="spacingAndGlyphs" >Sélectionnés les objets touchés, Cycler sur les objets, Forcer le déplacement</text>
<line x1="1219.3" y1="765" x2="1219.3" y2="796" stroke="#303030" stroke-width="1" />
<text x="1228" y="777.5" font-size="12.3" fill="#d4d4d4" textLength="13.4" lengthAdjust="spacingAndGlyphs" >X :</text>
<text x="1251.6" y="777.5" font-size="12.3" fill="#d4d4d4" textLength="33.8" lengthAdjust="spacingAndGlyphs" >533,34</text>
<text x="1228" y="793.5" font-size="12.3" fill="#d4d4d4" textLength="13.4" lengthAdjust="spacingAndGlyphs" >Y :</text>
<text x="1251.6" y="793.5" font-size="12.3" fill="#d4d4d4" textLength="33.8" lengthAdjust="spacingAndGlyphs" >320,42</text>
<text x="1293.2" y="785.6" font-size="12.3" fill="#d4d4d4" textLength="12" lengthAdjust="spacingAndGlyphs" >Z :</text>
<rect x="1306.5" y="765.5" width="76.5" height="30.8" rx="5" fill="#2d2d2d" stroke="#262626" stroke-width="1"/>
<line x1="1349.4" y1="766" x2="1349.4" y2="795.8" stroke="#292929" stroke-width="1" />
<line x1="1365.2" y1="766" x2="1365.2" y2="795.8" stroke="#292929" stroke-width="1" />
<line x1="1350.8000000000002" y1="780.9" x2="1362.8000000000002" y2="780.9" stroke="#f0f0f0" stroke-width="1.2" />
<line x1="1368.1" y1="780.9" x2="1380.1" y2="780.9" stroke="#f0f0f0" stroke-width="1.2" />
<line x1="1374.1" y1="774.9" x2="1374.1" y2="786.9" stroke="#f0f0f0" stroke-width="1.2" />
<text x="1313.3" y="785.8" font-size="12.5" fill="#dedede" textLength="27.8" lengthAdjust="spacingAndGlyphs" >143%</text>
<text x="1391.8" y="785.6" font-size="12.3" fill="#d4d4d4" textLength="12" lengthAdjust="spacingAndGlyphs" >R :</text>
<rect x="1404.9" y="765.5" width="82.6" height="30.8" rx="5" fill="#2d2d2d" stroke="#262626" stroke-width="1"/>
<line x1="1454.5" y1="766" x2="1454.5" y2="795.8" stroke="#292929" stroke-width="1" />
<line x1="1470.5" y1="766" x2="1470.5" y2="795.8" stroke="#292929" stroke-width="1" />
<line x1="1456.0" y1="780.9" x2="1468.0" y2="780.9" stroke="#f0f0f0" stroke-width="1.2" />
<line x1="1473.0" y1="780.9" x2="1485.0" y2="780.9" stroke="#f0f0f0" stroke-width="1.2" />
<line x1="1479.0" y1="774.9" x2="1479.0" y2="786.9" stroke="#f0f0f0" stroke-width="1.2" />
<text x="1416.8" y="785.8" font-size="12.5" fill="#dedede" textLength="26.8" lengthAdjust="spacingAndGlyphs" >0,00°</text>
<defs><linearGradient id="tb" x1="0" x2="1" y1="0" y2="0"><stop offset="0" stop-color="#1f1f1f"/><stop offset="0.15" stop-color="#202021"/><stop offset="0.28" stop-color="#1f2023"/><stop offset="0.31" stop-color="#1c2029"/><stop offset="0.45" stop-color="#1b2027"/><stop offset="0.55" stop-color="#1c1f22"/><stop offset="0.66" stop-color="#211f1d"/><stop offset="0.72" stop-color="#27221b"/><stop offset="0.76" stop-color="#24211d"/><stop offset="0.8" stop-color="#1c2126"/><stop offset="0.84" stop-color="#1d2023"/><stop offset="0.88" stop-color="#1e1e1f"/><stop offset="1" stop-color="#1d1d1d"/></linearGradient></defs>
<rect x="0" y="798" width="1500" height="46" fill="url(#tb)" />
<defs><radialGradient id="sun" cx="0.4" cy="0.4" r="0.6"><stop offset="0" stop-color="#ffd23a"/><stop offset="1" stop-color="#f08a00"/></radialGradient><linearGradient id="cl" x1="0" y1="0" x2="0" y2="1"><stop offset="0" stop-color="#c8dcf0"/><stop offset="1" stop-color="#f4f8fc"/></linearGradient></defs>
<circle cx="37.2" cy="814.6" r="6.2" fill="url(#sun)"/>
<path d="M22.5 829.8 Q19.2 829.8 19.2 826.3 Q19.2 822.8 23 822.5 Q23.8 816.5 29.5 816.3 Q33.8 816.3 35.5 820.5 Q39.5 820 41.5 823.5 Q43.3 824.8 43.2 827 Q43 829.8 40 829.8 Z" fill="url(#cl)" />
<text x="50.2" y="816.8" font-size="12" fill="#f2f2f2" textLength="21.2" lengthAdjust="spacingAndGlyphs" >11°C</text>
<text x="50.4" y="832.2" font-size="12" fill="#e0e0e0" textLength="62.6" lengthAdjust="spacingAndGlyphs" >Ciel couvert</text>
<defs><linearGradient id="wl" x1="0" y1="0" x2="1" y2="1"><stop offset="0" stop-color="#6fe0ff"/><stop offset="1" stop-color="#1a9ee8"/></linearGradient></defs>
<rect x="462.8" y="809.2" width="11.2" height="11" fill="url(#wl)" rx="0.8" />
<rect x="475" y="809.2" width="11.2" height="11" fill="url(#wl)" rx="0.8" />
<rect x="462.8" y="821.3" width="11.2" height="11" fill="url(#wl)" rx="0.8" />
<rect x="475" y="821.3" width="11.2" height="11" fill="url(#wl)" rx="0.8" />
<rect x="499" y="805" width="116" height="31" fill="#2b2f35" rx="15.5" />
<circle cx="527.3" cy="819.5" r="4.6" fill="none" stroke="#f0f0f0" stroke-width="1.6"/>
<line x1="530.5" y1="823" x2="534.5" y2="827" stroke="#f0f0f0" stroke-width="1.8" />
<text x="540" y="825.3" font-size="12.3" fill="#e8e8e8" textLength="54.5" lengthAdjust="spacingAndGlyphs" >Recherche</text>
<rect x="627.5" y="815.5" width="17" height="17" fill="#6a6a6a" rx="1.5" />
<rect x="633.5" y="809" width="18" height="17.5" fill="#f0f0f0" rx="1.5" />
<rect x="633.5" y="815.5" width="11" height="11" fill="#b5b5b5" rx="0.5" />
<defs><linearGradient id="tm" x1="0" y1="0" x2="1" y2="1"><stop offset="0" stop-color="#8b6fe8"/><stop offset="1" stop-color="#5a46c0"/></linearGradient></defs>
<circle cx="681.5" cy="820.5" r="11.2" fill="url(#tm)"/>
<path d="M671 828 L670 833 L676 830 Z" fill="#5a46c0" />
<rect x="675.5" y="816.5" width="8.5" height="8" fill="#f4f4f4" rx="1.5" />
<path d="M684.5 820.5 L688.5 817.5 L688.5 823.5 Z" fill="#f4f4f4" />
<rect x="713.5" y="812.8" width="23" height="19.8" fill="#f2f2f2" rx="2.5" />
<path d="M719.5 813.5 L719.5 810.8 L730.5 810.8 L730.5 813.5" fill="none" stroke="#2ab0f4" stroke-width="1.3" />
<rect x="721" y="818.5" width="3.6" height="3.6" fill="#f25022" />
<rect x="725.2" y="818.5" width="3.6" height="3.6" fill="#7fba00" />
<rect x="721" y="822.7" width="3.6" height="3.6" fill="#00a4ef" />
<rect x="725.2" y="822.7" width="3.6" height="3.6" fill="#ffb900" />
<defs><linearGradient id="ed" x1="0.15" y1="0.85" x2="0.85" y2="0.2"><stop offset="0" stop-color="#1070d0"/><stop offset="0.55" stop-color="#22a6e8"/><stop offset="1" stop-color="#5ad46a"/></linearGradient><linearGradient id="ed2" x1="0" y1="0" x2="1" y2="1"><stop offset="0" stop-color="#0e4e98"/><stop offset="1" stop-color="#1a74c8"/></linearGradient></defs>
<circle cx="768" cy="820.3" r="12" fill="url(#ed)"/>
<path d="M756.3 818 Q757 827 764 830.5 Q770 833 776.5 829.5 Q769.5 830 765.5 826 Q762 822.5 763.5 818.5 Q760.5 815.5 756.3 818 Z" fill="url(#ed2)" />
<path d="M763.2 819.5 Q763.5 815.2 767.8 815 Q772.3 815 772.8 819 Q770 817.2 767.8 818.8 Q765.8 820.5 767.5 823.5 Q763.2 823 763.2 819.5 Z" fill="#18202a" />
<defs><linearGradient id="dm" x1="0" y1="0" x2="1" y2="0"><stop offset="0" stop-color="#ff3ca0"/><stop offset="0.45" stop-color="#ff0a1e"/><stop offset="1" stop-color="#ff9a00"/></linearGradient></defs>
<path d="M810.6 808.8 L822.6 820.2 L810.6 831.6 L798.7 820.2 Z" fill="url(#dm)" />
<circle cx="854" cy="820" r="12" fill="#dd3c30"/>
<path d="M854 820 L843.6 826 A12 12 0 0 1 845.5 811.5 Z" fill="#2aa84a" />
<path d="M854 820 L864.4 826 A12 12 0 0 1 843.6 826 Z" fill="#2aa84a" />
<path d="M854 820 L864.4 814 A12 12 0 0 1 854 832 L843.6 826 Z" fill="#f8c21c" />
<path d="M854 820 L843.6 826 A12 12 0 0 1 845.5 811.5 Z" fill="#2aa84a" />
<circle cx="854" cy="820" r="5.5" fill="#ffffff"/><circle cx="854" cy="820" r="4.3" fill="#3a7ce8"/>
<rect x="851" y="836.8" width="6" height="2.4" fill="#a8a8a8" rx="1.2" />
<rect x="886" y="809.3" width="21.5" height="21.5" fill="#0a1a30" rx="3" />
<text x="888.5" y="825" font-size="11.5" fill="#35a8f5" font-weight="bold" textLength="17.5" lengthAdjust="spacingAndGlyphs" >LrC</text>
<path d="M927.5 810.5 L935.5 810.5 L938 813 L952 813 L952 831.5 L927.5 831.5 Z" fill="#e8a81a" />
<rect x="927.5" y="814.5" width="24.5" height="17" fill="#ffd24a" />
<rect x="932" y="825.5" width="14.5" height="6" fill="#1f7ad8" rx="1" />
<rect x="970.8" y="825.2" width="4.2" height="2.5" fill="#f29a2e" rx="0.5" />
<rect x="976.8" y="825.2" width="4.2" height="2.5" fill="#e8603c" rx="0.5" />
<rect x="976.8" y="820.7" width="4.2" height="2.5" fill="#f29a2e" rx="0.5" />
<rect x="976.8" y="816.2" width="4.2" height="2.5" fill="#f2c12e" rx="0.5" />
<rect x="982.8" y="825.2" width="4.2" height="2.5" fill="#a03ab0" rx="0.5" />
<rect x="982.8" y="820.7" width="4.2" height="2.5" fill="#d63a7e" rx="0.5" />
<rect x="988.8" y="825.2" width="4.2" height="2.5" fill="#2a6ee8" rx="0.5" />
<rect x="988.8" y="820.7" width="4.2" height="2.5" fill="#2a9ad8" rx="0.5" />
<rect x="988.8" y="816.2" width="4.2" height="2.5" fill="#24b37a" rx="0.5" />
<rect x="988.8" y="811.7" width="4.2" height="2.5" fill="#24b36a" rx="0.5" />
<rect x="979.8" y="836.8" width="6" height="2.6" fill="#a8a8a8" rx="1.3" />
<rect x="1006.5" y="801.5" width="39" height="38.5" rx="4" fill="#2d2c2a" stroke="#353432" stroke-width="1"/>
<defs><linearGradient id="ik" x1="0" y1="0" x2="1" y2="0.6"><stop offset="0.1" stop-color="#ffffff"/><stop offset="0.5" stop-color="#a8a8ac"/><stop offset="1" stop-color="#6f86a8"/></linearGradient></defs>
<path d="M1025.6 809.3 L1036.3 820.3 L1032 822.3 L1025.6 821 L1019.5 822.3 L1015.3 820.3 Z" fill="url(#ik)" stroke="#1a1a1a" stroke-width="0.8" stroke-linejoin="round"/>
<path d="M1022 817 Q1025 813.5 1028.5 816 Q1031 818.5 1029.5 821.5 L1034 823 L1031 824.5 L1032.5 827.5 L1029 826 L1027.5 830.5 L1025 830.5 L1023.5 827 L1019.5 828 L1021 824.5 L1018 823.5 L1021.5 821.5 Z" fill="#0e0e0e" />
<path d="M1028 824.5 L1030 829 L1027.5 830 Z" fill="#2a4060" />
<rect x="1017.8" y="836.3" width="15.6" height="3" fill="#f08068" rx="1.5" />
<path d="M1318.5 824.3 L1324.5 818.3 L1330.5 824.3" fill="none" stroke="#e8e8e8" stroke-width="1.2" />
<path d="M1343.5 820.7 A8 8 0 0 1 1359.5 820.7" fill="none" stroke="#f0f0f0" stroke-width="1.4" />
<path d="M1346.2 821.645 A5.3 5.3 0 0 1 1356.8 821.645" fill="none" stroke="#f0f0f0" stroke-width="1.4" />
<path d="M1348.8 822.555 A2.7 2.7 0 0 1 1354.2 822.555" fill="none" stroke="#f0f0f0" stroke-width="1.4" />
<circle cx="1351.5" cy="825" r="1.3" fill="#f0f0f0"/>
<path d="M1367.5 817.5 L1370 817.5 L1374 814 L1374 826 L1370 822.5 L1367.5 822.5 Z" fill="none" stroke="#f0f0f0" stroke-width="1.2" />
<path d="M1376.5 817.5 L1381 822 M1381 817.5 L1376.5 822" fill="none" stroke="#f0f0f0" stroke-width="1.2" />
<rect x="1390.8" y="815.5" width="13.5" height="9.5" fill="#1c1c1c" rx="2" stroke="#f0f0f0" stroke-width="1.2"/>
<rect x="1392.8" y="817.5" width="9.5" height="5.5" fill="#f0f0f0" rx="0.6" />
<rect x="1405.2" y="818.5" width="1.6" height="3.6" fill="#f0f0f0" rx="0.5" />
<text x="1481" y="817.5" font-size="12" fill="#f0f0f0" text-anchor="end" textLength="24.5" lengthAdjust="spacingAndGlyphs" >16:10</text>
<text x="1481" y="832.5" font-size="12" fill="#f0f0f0" text-anchor="end" textLength="58.5" lengthAdjust="spacingAndGlyphs" >15/03/2023</text>
</svg></body></html>
